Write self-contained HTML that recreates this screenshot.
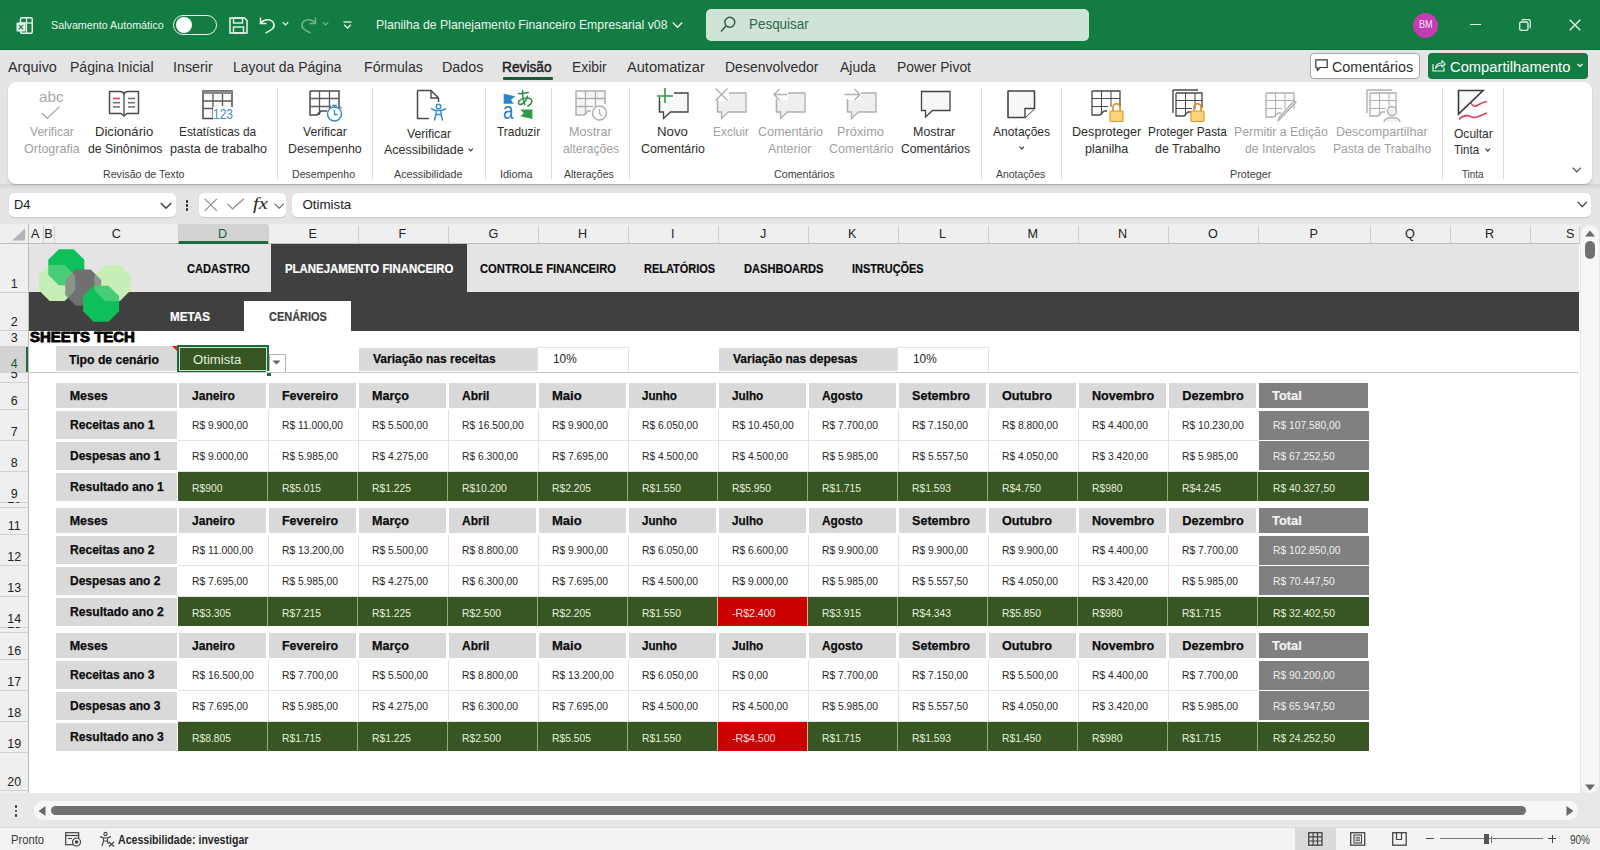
<!DOCTYPE html>
<html><head><meta charset="utf-8"><title>Excel</title>
<style>
html,body{margin:0;padding:0;}
body{width:1600px;height:850px;position:relative;overflow:hidden;background:#fff;font-family:"Liberation Sans", sans-serif;}
.t{position:absolute;line-height:0;white-space:nowrap;transform-origin:0 0;}
svg{position:absolute;overflow:visible;}
</style></head><body>
<div style="position:absolute;left:0px;top:0px;width:1600px;height:50px;background:#137c43;"></div>
<div style="position:absolute;left:0px;top:49.3px;width:1600px;height:0.7000000000000028px;background:#0f6a39;"></div>
<div style="position:absolute;left:0px;top:50px;width:1600px;height:174px;background:#e4e4e5;"></div>
<div style="position:absolute;left:0px;top:184px;width:1600px;height:6px;background:linear-gradient(#d2d2d5,#e4e4e5);"></div>
<div style="position:absolute;left:8px;top:82px;width:1584px;height:102px;background:#fff;border-radius:8px;box-shadow:0 1px 1.5px rgba(0,0,0,0.22);"></div>
<svg style="left:16px;top:17px" width="17" height="17" viewBox="0 0 17 17">
<rect x="4.5" y="0.75" width="11.75" height="15.5" rx="1.5" fill="none" stroke="#eaf5ee" stroke-width="1.5"/>
<line x1="4.5" y1="6" x2="16" y2="6" stroke="#eaf5ee" stroke-width="1.3"/>
<line x1="10.5" y1="1" x2="10.5" y2="16" stroke="#eaf5ee" stroke-width="1.3"/>
<rect x="0.5" y="5.5" width="9" height="9" rx="1.2" fill="#eaf5ee"/>
<path d="M2.8 7.8 L7.2 12.4 M7.2 7.8 L2.8 12.4" stroke="#137c43" stroke-width="1.2"/>
</svg>
<div style="position:absolute;left:172.5px;top:14.5px;width:42px;height:18px;border:1.5px solid #eaf5ee;border-radius:11px;"></div>
<div style="position:absolute;left:175.5px;top:17px;width:16px;height:16px;border-radius:50%;background:#fff;"></div>
<svg style="left:229px;top:17px" width="19" height="17" viewBox="0 0 19 17">
<path d="M1 1 H15.5 L18 3.5 V16 H1 Z" fill="none" stroke="#eaf5ee" stroke-width="1.5"/>
<rect x="4.5" y="1" width="9" height="5" fill="none" stroke="#eaf5ee" stroke-width="1.4"/>
<rect x="4.5" y="10" width="10" height="6" fill="none" stroke="#eaf5ee" stroke-width="1.4"/>
</svg>
<svg style="left:259px;top:16px" width="18" height="18" viewBox="0 0 18 18">
<path d="M1.5 1.5 V7.5 H7.5" fill="none" stroke="#eaf5ee" stroke-width="1.5"/>
<path d="M1.8 7.2 C5 3 12 2.5 14.5 7 C16.5 10.5 14 13.5 6.5 17" fill="none" stroke="#eaf5ee" stroke-width="1.5"/>
</svg>
<svg style="left:282px;top:21px" width="7" height="6" viewBox="0 0 7 6"><path d="M0.7 1.2 L3.5 4 L6.3 1.2" fill="none" stroke="#eaf5ee" stroke-width="1.2"/></svg>
<svg style="left:299px;top:16px" width="18" height="18" viewBox="0 0 18 18">
<path d="M16.5 1.5 V7.5 H10.5" fill="none" stroke="#6fb58c" stroke-width="1.5"/>
<path d="M16.2 7.2 C13 3 6 2.5 3.5 7 C1.5 10.5 4 13.5 11.5 17" fill="none" stroke="#6fb58c" stroke-width="1.5"/>
</svg>
<svg style="left:322px;top:21px" width="7" height="6" viewBox="0 0 7 6"><path d="M0.7 1.2 L3.5 4 L6.3 1.2" fill="none" stroke="#6fb58c" stroke-width="1.2"/></svg>
<svg style="left:343px;top:21px" width="9" height="9" viewBox="0 0 9 9"><line x1="0.5" y1="1" x2="8.5" y2="1" stroke="#eaf5ee" stroke-width="1.3"/><path d="M1.2 3.8 L4.5 7 L7.8 3.8" fill="none" stroke="#eaf5ee" stroke-width="1.3"/></svg>
<svg style="left:672px;top:21px" width="11" height="8" viewBox="0 0 11 8"><path d="M0.8 1.5 L5.5 6.2 L10.2 1.5" fill="none" stroke="#eaf5ee" stroke-width="1.4"/></svg>
<div style="position:absolute;left:706px;top:9px;width:383px;height:32px;background:#cfe3d6;border-radius:5px;"></div>
<svg style="left:720px;top:16px" width="16" height="17" viewBox="0 0 16 17">
<circle cx="9.8" cy="6.2" r="5" fill="none" stroke="#2c5a40" stroke-width="1.4"/>
<line x1="6.2" y1="9.8" x2="1" y2="15.5" stroke="#2c5a40" stroke-width="1.5"/>
</svg>
<div style="position:absolute;left:1412.5px;top:12.5px;width:25px;height:25px;border-radius:50%;background:#c43bb4;"></div>
<div style="position:absolute;left:1469.5px;top:24px;width:11px;height:1.3px;background:#eaf5ee;"></div>
<svg style="left:1519px;top:19px" width="12" height="12" viewBox="0 0 12 12">
<rect x="0.7" y="3" width="8.3" height="8.3" rx="1.5" fill="none" stroke="#eaf5ee" stroke-width="1.3"/>
<path d="M3 1.5 C3 0.8 3.5 0.7 4.5 0.7 H9.5 C10.8 0.7 11.3 1.2 11.3 2.5 V7.5 C11.3 8.5 11.2 9 10.5 9" fill="none" stroke="#eaf5ee" stroke-width="1.2"/>
</svg>
<svg style="left:1569px;top:19px" width="12" height="12" viewBox="0 0 12 12"><path d="M0.7 0.7 L11.3 11.3 M11.3 0.7 L0.7 11.3" stroke="#eaf5ee" stroke-width="1.3"/></svg>
<div style="position:absolute;left:502.5px;top:77px;width:50.5px;height:2.5px;background:#185c37;border-radius:1px;"></div>
<div style="position:absolute;left:1310px;top:53px;width:107.5px;height:23.5px;background:#fff;border:1px solid #a8a8a8;border-radius:4px;"></div>
<svg style="left:1315px;top:59px" width="13" height="13" viewBox="0 0 13 13">
<path d="M0.8 0.8 H12.2 V8.5 H5 L2.3 11.5 V8.5 H0.8 Z" fill="none" stroke="#333" stroke-width="1.2" stroke-linejoin="round"/>
</svg>
<div style="position:absolute;left:1428px;top:53px;width:159.5px;height:25.5px;background:#137c43;border-radius:4px;"></div>
<svg style="left:1432px;top:58px" width="14" height="14" viewBox="0 0 14 14">
<path d="M1 6 V13 H12 V9.5" fill="none" stroke="#eaf5ee" stroke-width="1.2"/>
<path d="M3.5 10.5 C4 6.5 6.5 5 10 5 V2.5 L13.2 6 L10 9.2 V7 C7.5 7 5 8 3.5 10.5 Z" fill="none" stroke="#eaf5ee" stroke-width="1.1" stroke-linejoin="round"/>
</svg>
<svg style="left:1577px;top:63px" width="6" height="5" viewBox="0 0 6 5"><path d="M0.5 1 L3 3.5 L5.5 1" fill="none" stroke="#fff" stroke-width="1.1"/></svg>
<div style="position:absolute;left:276.75px;top:88px;width:1.0px;height:91px;background:#dadada;"></div>
<div style="position:absolute;left:372.0px;top:88px;width:1.0px;height:91px;background:#dadada;"></div>
<div style="position:absolute;left:485.1px;top:88px;width:1.0px;height:91px;background:#dadada;"></div>
<div style="position:absolute;left:551.0px;top:88px;width:1.0px;height:91px;background:#dadada;"></div>
<div style="position:absolute;left:628.7px;top:88px;width:1.0px;height:91px;background:#dadada;"></div>
<div style="position:absolute;left:981.4px;top:88px;width:1.0px;height:91px;background:#dadada;"></div>
<div style="position:absolute;left:1061.0px;top:88px;width:1.0px;height:91px;background:#dadada;"></div>
<div style="position:absolute;left:1441.75px;top:88px;width:1.0px;height:91px;background:#dadada;"></div>
<div style="position:absolute;left:1503.0px;top:88px;width:1.0px;height:91px;background:#dadada;"></div>
<svg style="left:467.5px;top:148px" width="5.5" height="3.5" viewBox="0 0 5.5 3.5"><path d="M0.6 0.6 L2.75 2.9 L4.9 0.6" fill="none" stroke="#333" stroke-width="1.1"/></svg>
<svg style="left:1018.5px;top:146.25px" width="5.5" height="3.75" viewBox="0 0 5.5 3.75"><path d="M0.6 0.6 L2.75 3.15 L4.9 0.6" fill="none" stroke="#333" stroke-width="1.1"/></svg>
<svg style="left:1485.4px;top:147.75px" width="5.599999999999909" height="3.75" viewBox="0 0 5.599999999999909 3.75"><path d="M0.6 0.6 L2.7999999999999545 3.15 L4.999999999999909 0.6" fill="none" stroke="#333" stroke-width="1.1"/></svg>
<svg style="left:1571.9px;top:167.25px" width="9.349999999999909" height="5.550000000000011" viewBox="0 0 9.349999999999909 5.550000000000011"><path d="M0.6 0.6 L4.6749999999999545 4.950000000000012 L8.74999999999991 0.6" fill="none" stroke="#444" stroke-width="1.1"/></svg>
<svg style="left:40px;top:105px" width="22" height="15" viewBox="0 0 22 15"><path d="M1.6 8 L7.3 13.3 L19.5 1.6" fill="none" stroke="#a8a8a8" stroke-width="1.3"/></svg>
<svg style="left:108px;top:90px" width="33" height="28" viewBox="0 0 33 28"><path d="M1.5 1.5 H12 C14 1.5 15.5 2.5 16 4 C16.5 2.5 18 1.5 20 1.5 H30.5 V23.5 H19 L16 26 L13 23.5 H1.5 Z" fill="#fafafa" stroke="#4a4a4a" stroke-width="1.5" stroke-linejoin="round"/>
<line x1="16" y1="4" x2="16" y2="25" stroke="#4a4a4a" stroke-width="1.3"/>
<line x1="5" y1="8.5" x2="12" y2="8.5" stroke="#e0426b" stroke-width="1.6"/>
<line x1="5" y1="12.7" x2="12" y2="12.7" stroke="#707070" stroke-width="1.5"/>
<line x1="5" y1="16.9" x2="12" y2="16.9" stroke="#707070" stroke-width="1.5"/>
<line x1="20" y1="8.5" x2="27" y2="8.5" stroke="#707070" stroke-width="1.5"/>
<line x1="20" y1="12.7" x2="27" y2="12.7" stroke="#707070" stroke-width="1.5"/>
<line x1="20" y1="16.9" x2="27" y2="16.9" stroke="#707070" stroke-width="1.5"/></svg>
<svg style="left:202px;top:90px" width="32" height="31" viewBox="0 0 32 31"><rect x="1" y="1" width="29" height="27.5" fill="#fafafa" stroke="#4a4a4a" stroke-width="1.5"/>
<rect x="1" y="1" width="29" height="3" fill="#888"/>
<path d="M1 11 H30 M1 18.5 H12 M11 4 V28.5 M20.5 4 V16" stroke="#5a5a5a" stroke-width="1.3" fill="none"/>
<rect x="11" y="17" width="21" height="13" fill="#fff"/></svg>
<svg style="left:309px;top:90px" width="36" height="33" viewBox="0 0 36 33"><path d="M1 1 H30 V18 M1 1 V25 H8 L12 21 H18" fill="none" stroke="#4a4a4a" stroke-width="1.5"/>
<path d="M1 8.5 H30 M1 16.5 H22 M10.5 1 V25 M20.5 1 V18" stroke="#5a5a5a" stroke-width="1.3" fill="none"/>
<path d="M8 25 L12 21" stroke="#4a4a4a" stroke-width="1.2"/>
<circle cx="25.5" cy="24" r="7" fill="#fff" stroke="#3a8cc9" stroke-width="1.5"/>
<path d="M23 15.5 H28 M25.5 15.5 V17 M25.5 20 V24.5 H28.5 M31 17 L32.5 18.5" fill="none" stroke="#3a8cc9" stroke-width="1.4"/></svg>
<svg style="left:416px;top:89px" width="32" height="33" viewBox="0 0 32 33"><path d="M1.5 1.5 H15 L22.5 9 V13 M1.5 1.5 V29.5 H13" fill="none" stroke="#4a4a4a" stroke-width="1.5"/>
<path d="M15 1.5 V9 H22.5" fill="none" stroke="#4a4a4a" stroke-width="1.4"/>
<circle cx="22.5" cy="17.5" r="2.3" fill="none" stroke="#3a8cc9" stroke-width="1.4"/>
<path d="M15.5 19.5 C17.5 22 19.5 21.5 22.5 21.5 C25.5 21.5 27.5 22 29.5 19.5 M20 21.8 V25.5 L18.5 31 M25 21.8 V25.5 L26.5 31 M20 25.5 H25" fill="none" stroke="#3a8cc9" stroke-width="1.5" stroke-linecap="round"/></svg>
<svg style="left:0px;top:0px" width="1600" height="850" viewBox="0 0 1600 850"><path d="M503.7 93.7 L515.2 96.3 L511 100 L513.8 103.8 L503.7 103.8 Z" fill="#2b86cf"/><path d="M532.4 119 L520.4 116.3 L523.8 113.2 L520.4 109.5 L532.4 109.5 Z" fill="#2e9a48"/></svg>
<svg style="left:516px;top:89px" width="18" height="19" viewBox="0 0 18 19"><path d="M2.5 4.6 C5.5 4.8 9 4.3 12.2 3.6" fill="none" stroke="#2e8b4a" stroke-width="1.5" stroke-linecap="round"/><path d="M6.6 1.6 C6.4 5.5 6.8 10.5 8.8 15.8" fill="none" stroke="#2e8b4a" stroke-width="1.5" stroke-linecap="round"/><path d="M11.5 7.2 C10.5 11 7.5 15.5 4.2 15.5 C2.2 15.5 1.8 13.2 3.5 11.5 C6 9 11.5 8.3 14.2 9.6 C16.8 10.9 16.5 15 11.8 17" fill="none" stroke="#2e8b4a" stroke-width="1.5" stroke-linecap="round"/></svg>
<svg style="left:575px;top:90px" width="34" height="31" viewBox="0 0 34 31"><path d="M1 1 H30 V14 M1 1 V25 H9 L13 21 H16" fill="#f4f4f4" stroke="#b0b0b0" stroke-width="1.5"/>
<path d="M1 8.5 H30 M1 16.5 H18 M10.5 1 V25 M20.5 1 V17" stroke="#b0b0b0" stroke-width="1.3" fill="none"/>
<circle cx="24.5" cy="23" r="7" fill="#fff" stroke="#b0b0b0" stroke-width="1.5"/>
<path d="M24.5 19 V23.5 L27 26" fill="none" stroke="#b0b0b0" stroke-width="1.3"/></svg>
<svg style="left:657px;top:87px" width="33" height="33" viewBox="0 0 33 33"><g transform="translate(1.5,5)"><path d="M1 1 H29.5 V20 H12 L5 26.5 V20 H1 Z" fill="#f7f7f7" stroke="#444" stroke-width="1.3" stroke-linejoin="miter"/></g>
<rect x="0" y="3.5" width="17" height="10" fill="#fff"/>
<path d="M0 9 H16 M8 1 V16" stroke="#2e9a48" stroke-width="1.6"/>
<path d="M2.5 10 V25" stroke="#444" stroke-width="1.3"/></svg>
<svg style="left:714px;top:87px" width="34" height="33" viewBox="0 0 34 33"><g transform="translate(2.5,5)"><path d="M1 1 H29.5 V20 H12 L5 26.5 V20 H1 Z" fill="#efefef" stroke="#b0b0b0" stroke-width="1.3" stroke-linejoin="miter"/></g>
<rect x="0" y="1" width="15" height="13" fill="#fff"/>
<path d="M1.5 1.5 L13.5 13.5 M13.5 1.5 L1.5 13.5" stroke="#b0b0b0" stroke-width="1.4"/>
<path d="M3.5 12 V25" stroke="#b0b0b0" stroke-width="1.3"/></svg>
<svg style="left:773px;top:87px" width="34" height="33" viewBox="0 0 34 33"><g transform="translate(2.5,5)"><path d="M1 1 H29.5 V20 H12 L5 26.5 V20 H1 Z" fill="#efefef" stroke="#b0b0b0" stroke-width="1.3" stroke-linejoin="miter"/></g>
<rect x="0" y="2" width="15" height="11" fill="#fff"/>
<path d="M1 7.5 H14 M6.5 2 L1 7.5 L6.5 13" fill="none" stroke="#b0b0b0" stroke-width="1.4"/>
<path d="M3.5 12 V25" stroke="#b0b0b0" stroke-width="1.3"/></svg>
<svg style="left:844px;top:87px" width="34" height="33" viewBox="0 0 34 33"><g transform="translate(2.5,5)"><path d="M1 1 H29.5 V20 H12 L5 26.5 V20 H1 Z" fill="#efefef" stroke="#b0b0b0" stroke-width="1.3" stroke-linejoin="miter"/></g>
<rect x="0" y="2" width="17" height="11" fill="#fff"/>
<path d="M0.5 7.5 H16 M10.5 2 L16 7.5 L10.5 13" fill="none" stroke="#b0b0b0" stroke-width="1.4"/>
<path d="M3.5 12 V25" stroke="#b0b0b0" stroke-width="1.3"/></svg>
<svg style="left:920px;top:90px" width="33" height="30" viewBox="0 0 33 30"><g transform="translate(0.5,0.5)"><path d="M1 1 H29.5 V20 H12 L5 26.5 V20 H1 Z" fill="#f7f7f7" stroke="#444" stroke-width="1.3" stroke-linejoin="miter"/></g></svg>
<svg style="left:1007px;top:90px" width="30" height="30" viewBox="0 0 30 30"><path d="M1 1 H27.5 V18.5 L18 27.5 H1 Z" fill="#f7f7f7" stroke="#444" stroke-width="1.6" stroke-linejoin="round"/><path d="M27.5 18.5 H18 V27.5" fill="#fff" stroke="#444" stroke-width="1.4"/></svg>
<svg style="left:1091px;top:90px" width="34" height="33" viewBox="0 0 34 33"><path d="M1 1 H29 V17 M1 1 V25 H9 L13 21 H16" fill="#fbfbfb" stroke="#4a4a4a" stroke-width="1.3"/>
<path d="M1 8.5 H29 M1 16.5 H17 M10.5 1 V25 M20 1 V17" stroke="#4a4a4a" stroke-width="1" fill="none"/><path d="M22 12 V8.5 C22 3.5 29 3.5 29 8.5 V12" transform="translate(0,9)" fill="none" stroke="#d98c1f" stroke-width="1.6"/><rect x="19" y="21" width="13" height="10.5" rx="1" fill="#f9d27a" stroke="#dc9a2e" stroke-width="1.2"/></svg>
<svg style="left:1172px;top:89px" width="34" height="34" viewBox="0 0 34 34"><path d="M1 1 H26 M1 1 V24" stroke="#4a4a4a" stroke-width="1.4" fill="none"/><g transform="translate(3,3)"><path d="M1 1 H27 V16 M1 1 V24 H9 L13 20 H16" fill="#fbfbfb" stroke="#4a4a4a" stroke-width="1.3"/>
<path d="M1 8.5 H27 M1 16.5 H17 M10.5 1 V24 M20 1 V17" stroke="#4a4a4a" stroke-width="1" fill="none"/></g><path d="M22 12 V8.5 C22 3.5 29 3.5 29 8.5 V12" transform="translate(0,10)" fill="none" stroke="#d98c1f" stroke-width="1.6"/><rect x="19" y="22" width="13" height="10.5" rx="1" fill="#f9d27a" stroke="#dc9a2e" stroke-width="1.2"/></svg>
<svg style="left:1265px;top:92px" width="34" height="31" viewBox="0 0 34 31"><path d="M1 1 H29 V17 M1 1 V25 H9 L13 21 H16" fill="#fbfbfb" stroke="#b0b0b0" stroke-width="1.3"/>
<path d="M1 8.5 H29 M1 16.5 H17 M10.5 1 V25 M20 1 V17" stroke="#b0b0b0" stroke-width="1" fill="none"/><path d="M31 10 L16 26 L13 29 L14.5 25 L29 9 Z" fill="#fff" stroke="#b0b0b0" stroke-width="1.4" stroke-linejoin="round"/></svg>
<svg style="left:1366px;top:89px" width="34" height="34" viewBox="0 0 34 34"><path d="M1 1 H26 M1 1 V24" stroke="#b0b0b0" stroke-width="1.4" fill="none"/><g transform="translate(3,3)"><path d="M1 1 H27 V16 M1 1 V24 H9 L13 20 H16" fill="#fbfbfb" stroke="#b0b0b0" stroke-width="1.3"/>
<path d="M1 8.5 H27 M1 16.5 H17 M10.5 1 V24 M20 1 V17" stroke="#b0b0b0" stroke-width="1" fill="none"/></g><circle cx="26" cy="22" r="4.5" fill="#f0f0f0" stroke="#b0b0b0" stroke-width="1.4"/><path d="M18 33 C18 27 34 27 34 33" fill="#f0f0f0" stroke="#b0b0b0" stroke-width="1.4"/></svg>
<svg style="left:1457px;top:89px" width="33" height="32" viewBox="0 0 33 32"><path d="M1.5 1.5 H26 L1.5 25 Z" fill="#f7f7f7" stroke="#3a3a3a" stroke-width="1.6" stroke-linejoin="miter"/><path d="M14 14 C16 18 18 18 22 15.5 C25 13.5 27 13 30 12.5" fill="none" stroke="#d6405a" stroke-width="1.6"/><path d="M2 30.5 C6 26 11 26 15 28 C19 30 22 27 30 24" fill="none" stroke="#d6405a" stroke-width="1.6"/></svg>
<div style="position:absolute;left:9px;top:193px;width:167px;height:24px;background:#fff;border-radius:5px;box-shadow:0 0.5px 1px rgba(0,0,0,0.12);"></div>
<svg style="left:160px;top:202px" width="12" height="8" viewBox="0 0 12 8"><path d="M0.8 1 L6 6.3 L11.2 1" fill="none" stroke="#333" stroke-width="1.3"/></svg>
<div style="position:absolute;left:185.8px;top:200.10000000000002px;width:2.5px;height:2.5px;border-radius:50%;background:#222;"></div>
<div style="position:absolute;left:185.8px;top:204.20000000000002px;width:2.5px;height:2.5px;border-radius:50%;background:#222;"></div>
<div style="position:absolute;left:185.8px;top:208.20000000000002px;width:2.5px;height:2.5px;border-radius:50%;background:#222;"></div>
<div style="position:absolute;left:198.6px;top:193px;width:87px;height:23.5px;background:#fff;border-radius:5px;box-shadow:0 0.5px 1px rgba(0,0,0,0.12);"></div>
<svg style="left:204px;top:198px" width="14" height="14" viewBox="0 0 14 14"><path d="M0.8 0.8 L12.8 12.8 M12.8 0.8 L0.8 12.8" stroke="#8e8e8e" stroke-width="1.2"/></svg>
<svg style="left:227px;top:198px" width="18" height="12" viewBox="0 0 18 12"><path d="M0.6 5.8 L5.5 10.8 L16.8 0.8" fill="none" stroke="#8e8e8e" stroke-width="1.2"/></svg>
<svg style="left:274px;top:203px" width="11" height="6" viewBox="0 0 11 6"><path d="M0.6 0.6 L5.2 5.2 L9.8 0.6" fill="none" stroke="#666" stroke-width="1.1"/></svg>
<div style="position:absolute;left:292px;top:193px;width:1298.5px;height:24px;background:#fff;border-radius:5px;box-shadow:0 0.5px 1px rgba(0,0,0,0.12);"></div>
<svg style="left:1577px;top:201px" width="11" height="7" viewBox="0 0 11 7"><path d="M0.7 0.8 L5.3 5.6 L9.9 0.8" fill="none" stroke="#333" stroke-width="1.2"/></svg>
<div style="position:absolute;left:0px;top:224px;width:1580px;height:19.5px;background:#efefef;"></div>
<div style="position:absolute;left:0px;top:243px;width:1580px;height:1px;background:#bdbdbd;"></div>
<div style="position:absolute;left:178px;top:224px;width:90px;height:19.5px;background:#d3d3d3;"></div>
<div style="position:absolute;left:178px;top:241.3px;width:90px;height:2.299999999999983px;background:#1f6b41;"></div>
<svg style="left:11px;top:228px" width="15" height="13" viewBox="0 0 15 13"><path d="M14 0.5 V12.5 H1 Z" fill="#b4b4b4"/></svg>
<div style="position:absolute;left:27.5px;top:224px;width:1.0px;height:20px;background:#c4c4c4;"></div>
<div style="position:absolute;left:42.5px;top:225.5px;width:1.0px;height:17.5px;background:#cfcfcf;"></div>
<div style="position:absolute;left:54.0px;top:225.5px;width:1.0px;height:17.5px;background:#cfcfcf;"></div>
<div style="position:absolute;left:177.5px;top:225.5px;width:1.0px;height:17.5px;background:#cfcfcf;"></div>
<div style="position:absolute;left:267.5px;top:225.5px;width:1.0px;height:17.5px;background:#cfcfcf;"></div>
<div style="position:absolute;left:357.5px;top:225.5px;width:1.0px;height:17.5px;background:#cfcfcf;"></div>
<div style="position:absolute;left:447.5px;top:225.5px;width:1.0px;height:17.5px;background:#cfcfcf;"></div>
<div style="position:absolute;left:537.5px;top:225.5px;width:1.0px;height:17.5px;background:#cfcfcf;"></div>
<div style="position:absolute;left:627.5px;top:225.5px;width:1.0px;height:17.5px;background:#cfcfcf;"></div>
<div style="position:absolute;left:717.5px;top:225.5px;width:1.0px;height:17.5px;background:#cfcfcf;"></div>
<div style="position:absolute;left:807.5px;top:225.5px;width:1.0px;height:17.5px;background:#cfcfcf;"></div>
<div style="position:absolute;left:897.5px;top:225.5px;width:1.0px;height:17.5px;background:#cfcfcf;"></div>
<div style="position:absolute;left:987.5px;top:225.5px;width:1.0px;height:17.5px;background:#cfcfcf;"></div>
<div style="position:absolute;left:1077.5px;top:225.5px;width:1.0px;height:17.5px;background:#cfcfcf;"></div>
<div style="position:absolute;left:1167.5px;top:225.5px;width:1.0px;height:17.5px;background:#cfcfcf;"></div>
<div style="position:absolute;left:1257.5px;top:225.5px;width:1.0px;height:17.5px;background:#cfcfcf;"></div>
<div style="position:absolute;left:1369.5px;top:225.5px;width:1.0px;height:17.5px;background:#cfcfcf;"></div>
<div style="position:absolute;left:1449.5px;top:225.5px;width:1.0px;height:17.5px;background:#cfcfcf;"></div>
<div style="position:absolute;left:1529.5px;top:225.5px;width:1.0px;height:17.5px;background:#cfcfcf;"></div>
<div style="position:absolute;left:1578.5px;top:225.5px;width:1.0px;height:17.5px;background:#cfcfcf;"></div>
<div style="position:absolute;left:0px;top:244px;width:28px;height:549px;background:#efefef;"></div>
<div style="position:absolute;left:0px;top:346px;width:28px;height:26px;background:#d3d3d3;"></div>
<div style="position:absolute;left:26px;top:346px;width:2.1999999999999993px;height:26px;background:#1f6b41;"></div>
<div style="position:absolute;left:28px;top:244px;width:1px;height:549px;background:#bdbdbd;"></div>
<div style="position:absolute;left:0px;top:291.5px;width:28px;height:1.0px;background:#d2d2d2;"></div>
<div style="position:absolute;left:0px;top:329.5px;width:28px;height:1.0px;background:#d2d2d2;"></div>
<div style="position:absolute;left:0px;top:345.5px;width:28px;height:1.0px;background:#d2d2d2;"></div>
<div style="position:absolute;left:0px;top:371.5px;width:28px;height:1.0px;background:#d2d2d2;"></div>
<div style="position:absolute;left:0px;top:381.5px;width:28px;height:1.0px;background:#d2d2d2;"></div>
<div style="position:absolute;left:0px;top:408.5px;width:28px;height:1.0px;background:#d2d2d2;"></div>
<div style="position:absolute;left:0px;top:439.5px;width:28px;height:1.0px;background:#d2d2d2;"></div>
<div style="position:absolute;left:0px;top:470.5px;width:28px;height:1.0px;background:#d2d2d2;"></div>
<div style="position:absolute;left:0px;top:501.5px;width:28px;height:1.0px;background:#d2d2d2;"></div>
<div style="position:absolute;left:0px;top:506.5px;width:28px;height:1.0px;background:#d2d2d2;"></div>
<div style="position:absolute;left:0px;top:533.5px;width:28px;height:1.0px;background:#d2d2d2;"></div>
<div style="position:absolute;left:0px;top:564.5px;width:28px;height:1.0px;background:#d2d2d2;"></div>
<div style="position:absolute;left:0px;top:595.5px;width:28px;height:1.0px;background:#d2d2d2;"></div>
<div style="position:absolute;left:0px;top:626.5px;width:28px;height:1.0px;background:#d2d2d2;"></div>
<div style="position:absolute;left:0px;top:631.5px;width:28px;height:1.0px;background:#d2d2d2;"></div>
<div style="position:absolute;left:0px;top:658.5px;width:28px;height:1.0px;background:#d2d2d2;"></div>
<div style="position:absolute;left:0px;top:689.5px;width:28px;height:1.0px;background:#d2d2d2;"></div>
<div style="position:absolute;left:0px;top:720.5px;width:28px;height:1.0px;background:#d2d2d2;"></div>
<div style="position:absolute;left:0px;top:751.5px;width:28px;height:1.0px;background:#d2d2d2;"></div>
<div style="position:absolute;left:0px;top:789.5px;width:28px;height:1.0px;background:#d2d2d2;"></div>
<div style="position:absolute;left:29px;top:244px;width:1551px;height:549px;background:#ffffff;"></div>
<div style="position:absolute;left:29px;top:244px;width:1550px;height:48px;background:#e4e4e4;"></div>
<div style="position:absolute;left:29px;top:292px;width:1550px;height:38.5px;background:#404040;"></div>
<div style="position:absolute;left:271px;top:244px;width:195.5px;height:48px;background:#404040;"></div>
<div style="position:absolute;left:244px;top:301px;width:107px;height:29.5px;background:#ffffff;"></div>
<svg style="left:0px;top:0px" width="1600" height="850" viewBox="0 0 1600 850">
<polygon points="75.22,290.46 64.66,301.02 49.74,301.02 39.18,290.46 39.18,275.54 49.74,264.98 64.66,264.98 75.22,275.54" fill="#c7eeb6"/>
<polygon points="130.42,290.46 119.86,301.02 104.94,301.02 94.38,290.46 94.38,275.54 104.94,264.98 119.86,264.98 130.42,275.54" fill="#c7eeb6"/>
<polygon points="84.32,274.76 73.76,285.32 58.84,285.32 48.28,274.76 48.28,259.84 58.84,249.28 73.76,249.28 84.32,259.84" fill="#0fbf59"/>
<polygon points="101.22,294.96 90.66,305.52 75.74,305.52 65.18,294.96 65.18,280.04 75.74,269.48 90.66,269.48 101.22,280.04" fill="#707070"/>
<polygon points="119.12,311.26 108.56,321.82 93.64,321.82 83.08,311.26 83.08,296.34 93.64,285.78 108.56,285.78 119.12,296.34" fill="#0fbf59"/>
<polygon points="75.22,290.46 64.66,301.02 49.74,301.02 39.18,290.46 39.18,275.54 49.74,264.98 64.66,264.98 75.22,275.54" fill="#c7eeb6" opacity="0.3"/>
<polygon points="130.42,290.46 119.86,301.02 104.94,301.02 94.38,290.46 94.38,275.54 104.94,264.98 119.86,264.98 130.42,275.54" fill="#c7eeb6" opacity="0.3"/>
</svg>
<div style="position:absolute;left:56px;top:346.3px;width:120.9px;height:24.5px;background:#d9d9d9;"></div>
<svg style="left:172px;top:346px" width="5" height="5" viewBox="0 0 5 5"><path d="M0 0 H5 V5 Z" fill="#e02020"/></svg>
<div style="position:absolute;left:177.3px;top:345.3px;width:91.5px;height:28.099999999999966px;background:#1f6b41;"></div>
<div style="position:absolute;left:179.3px;top:347.3px;width:87.5px;height:24.099999999999966px;background:#c9e3c9;"></div>
<div style="position:absolute;left:180.3px;top:348.3px;width:85.5px;height:22.099999999999966px;background:#375623;"></div>
<div style="position:absolute;left:268.5px;top:353.5px;width:15.5px;height:17.5px;background:#fff;border:1px solid #b5b5b5;"></div>
<svg style="left:272px;top:360px" width="9" height="5" viewBox="0 0 9 5"><path d="M0.5 0.5 H8.5 L4.5 4.5 Z" fill="#606060"/></svg>
<div style="position:absolute;left:265.5px;top:370.5px;width:6.0px;height:6.0px;background:#ffffff;"></div>
<div style="position:absolute;left:266.5px;top:371.5px;width:4.0px;height:4.0px;background:#1f6b41;"></div>
<div style="position:absolute;left:359px;top:347.5px;width:177.60000000000002px;height:23.5px;background:#d9d9d9;"></div>
<div style="position:absolute;left:537px;top:346.5px;width:90px;height:24px;border:1px solid #e4e4e4;border-bottom:none;"></div>
<div style="position:absolute;left:719px;top:347.5px;width:177.5px;height:23.5px;background:#d9d9d9;"></div>
<div style="position:absolute;left:897px;top:346.5px;width:90px;height:24px;border:1px solid #e4e4e4;border-bottom:none;"></div>
<div style="position:absolute;left:29px;top:372px;width:1550px;height:1.3000000000000114px;background:#c6c6c6;"></div>
<div style="position:absolute;left:56.2px;top:383.2px;width:120.60000000000001px;height:24.600000000000023px;background:#d9d9d9;"></div>
<div style="position:absolute;left:56.2px;top:410.9px;width:120.60000000000001px;height:27.900000000000034px;background:#d9d9d9;"></div>
<div style="position:absolute;left:56.2px;top:442px;width:120.60000000000001px;height:27.80000000000001px;background:#d9d9d9;"></div>
<div style="position:absolute;left:56.2px;top:472.6px;width:120.60000000000001px;height:28.099999999999966px;background:#d9d9d9;"></div>
<div style="position:absolute;left:178px;top:440px;width:1080px;height:1px;background:#e2e2e2;"></div>
<div style="position:absolute;left:178px;top:470.5px;width:1080px;height:1.0px;background:#e2e2e2;"></div>
<div style="position:absolute;left:179.2px;top:383.2px;width:87.10000000000002px;height:24.600000000000023px;background:#d9d9d9;"></div>
<div style="position:absolute;left:177.7px;top:472.3px;width:90.0px;height:29.099999999999966px;background:#375623;"></div>
<div style="position:absolute;left:269.2px;top:383.2px;width:87.10000000000002px;height:24.600000000000023px;background:#d9d9d9;"></div>
<div style="position:absolute;left:267.5px;top:410px;width:1.0px;height:61px;background:#e2e2e2;"></div>
<div style="position:absolute;left:267.7px;top:472.3px;width:90.0px;height:29.099999999999966px;background:#375623;"></div>
<div style="position:absolute;left:267.2px;top:472.3px;width:1.0px;height:29.099999999999966px;background:#8fae7a;"></div>
<div style="position:absolute;left:359.2px;top:383.2px;width:87.10000000000002px;height:24.600000000000023px;background:#d9d9d9;"></div>
<div style="position:absolute;left:357.5px;top:410px;width:1.0px;height:61px;background:#e2e2e2;"></div>
<div style="position:absolute;left:357.7px;top:472.3px;width:90.0px;height:29.099999999999966px;background:#375623;"></div>
<div style="position:absolute;left:357.2px;top:472.3px;width:1.0px;height:29.099999999999966px;background:#8fae7a;"></div>
<div style="position:absolute;left:449.2px;top:383.2px;width:87.09999999999997px;height:24.600000000000023px;background:#d9d9d9;"></div>
<div style="position:absolute;left:447.5px;top:410px;width:1.0px;height:61px;background:#e2e2e2;"></div>
<div style="position:absolute;left:447.7px;top:472.3px;width:90.00000000000006px;height:29.099999999999966px;background:#375623;"></div>
<div style="position:absolute;left:447.2px;top:472.3px;width:1.0px;height:29.099999999999966px;background:#8fae7a;"></div>
<div style="position:absolute;left:539.2px;top:383.2px;width:87.09999999999991px;height:24.600000000000023px;background:#d9d9d9;"></div>
<div style="position:absolute;left:537.5px;top:410px;width:1.0px;height:61px;background:#e2e2e2;"></div>
<div style="position:absolute;left:537.7px;top:472.3px;width:90.0px;height:29.099999999999966px;background:#375623;"></div>
<div style="position:absolute;left:537.2px;top:472.3px;width:1.0px;height:29.099999999999966px;background:#8fae7a;"></div>
<div style="position:absolute;left:629.2px;top:383.2px;width:87.09999999999991px;height:24.600000000000023px;background:#d9d9d9;"></div>
<div style="position:absolute;left:627.5px;top:410px;width:1.0px;height:61px;background:#e2e2e2;"></div>
<div style="position:absolute;left:627.7px;top:472.3px;width:90.0px;height:29.099999999999966px;background:#375623;"></div>
<div style="position:absolute;left:627.2px;top:472.3px;width:1.0px;height:29.099999999999966px;background:#8fae7a;"></div>
<div style="position:absolute;left:719.2px;top:383.2px;width:87.09999999999991px;height:24.600000000000023px;background:#d9d9d9;"></div>
<div style="position:absolute;left:717.5px;top:410px;width:1.0px;height:61px;background:#e2e2e2;"></div>
<div style="position:absolute;left:717.7px;top:472.3px;width:90.0px;height:29.099999999999966px;background:#375623;"></div>
<div style="position:absolute;left:717.2px;top:472.3px;width:1.0px;height:29.099999999999966px;background:#8fae7a;"></div>
<div style="position:absolute;left:809.2px;top:383.2px;width:87.09999999999991px;height:24.600000000000023px;background:#d9d9d9;"></div>
<div style="position:absolute;left:807.5px;top:410px;width:1.0px;height:61px;background:#e2e2e2;"></div>
<div style="position:absolute;left:807.7px;top:472.3px;width:90.0px;height:29.099999999999966px;background:#375623;"></div>
<div style="position:absolute;left:807.2px;top:472.3px;width:1.0px;height:29.099999999999966px;background:#8fae7a;"></div>
<div style="position:absolute;left:899.2px;top:383.2px;width:87.09999999999991px;height:24.600000000000023px;background:#d9d9d9;"></div>
<div style="position:absolute;left:897.5px;top:410px;width:1.0px;height:61px;background:#e2e2e2;"></div>
<div style="position:absolute;left:897.7px;top:472.3px;width:90.0px;height:29.099999999999966px;background:#375623;"></div>
<div style="position:absolute;left:897.2px;top:472.3px;width:1.0px;height:29.099999999999966px;background:#8fae7a;"></div>
<div style="position:absolute;left:989.2px;top:383.2px;width:87.09999999999991px;height:24.600000000000023px;background:#d9d9d9;"></div>
<div style="position:absolute;left:987.5px;top:410px;width:1.0px;height:61px;background:#e2e2e2;"></div>
<div style="position:absolute;left:987.7px;top:472.3px;width:90.0px;height:29.099999999999966px;background:#375623;"></div>
<div style="position:absolute;left:987.2px;top:472.3px;width:1.0px;height:29.099999999999966px;background:#8fae7a;"></div>
<div style="position:absolute;left:1079.2px;top:383.2px;width:87.09999999999991px;height:24.600000000000023px;background:#d9d9d9;"></div>
<div style="position:absolute;left:1077.5px;top:410px;width:1.0px;height:61px;background:#e2e2e2;"></div>
<div style="position:absolute;left:1077.7px;top:472.3px;width:90.0px;height:29.099999999999966px;background:#375623;"></div>
<div style="position:absolute;left:1077.2px;top:472.3px;width:1.0px;height:29.099999999999966px;background:#8fae7a;"></div>
<div style="position:absolute;left:1169.2px;top:383.2px;width:87.09999999999991px;height:24.600000000000023px;background:#d9d9d9;"></div>
<div style="position:absolute;left:1167.5px;top:410px;width:1.0px;height:61px;background:#e2e2e2;"></div>
<div style="position:absolute;left:1167.7px;top:472.3px;width:90.0px;height:29.099999999999966px;background:#375623;"></div>
<div style="position:absolute;left:1167.2px;top:472.3px;width:1.0px;height:29.099999999999966px;background:#8fae7a;"></div>
<div style="position:absolute;left:1259.4px;top:383.2px;width:108.89999999999986px;height:24.600000000000023px;background:#808080;"></div>
<div style="position:absolute;left:1258.7px;top:410.6px;width:110.0px;height:29.0px;background:#808080;"></div>
<div style="position:absolute;left:1258.7px;top:441.2px;width:110.0px;height:29.0px;background:#808080;"></div>
<div style="position:absolute;left:1257.7px;top:472.3px;width:111.0px;height:28.69999999999999px;background:#375623;"></div>
<div style="position:absolute;left:1257.2px;top:472.3px;width:1.0px;height:28.69999999999999px;background:#8fae7a;"></div>
<div style="position:absolute;left:56.2px;top:508.2px;width:120.60000000000001px;height:24.599999999999966px;background:#d9d9d9;"></div>
<div style="position:absolute;left:56.2px;top:535.9px;width:120.60000000000001px;height:27.899999999999977px;background:#d9d9d9;"></div>
<div style="position:absolute;left:56.2px;top:567px;width:120.60000000000001px;height:27.799999999999955px;background:#d9d9d9;"></div>
<div style="position:absolute;left:56.2px;top:597.6px;width:120.60000000000001px;height:28.100000000000023px;background:#d9d9d9;"></div>
<div style="position:absolute;left:178px;top:565px;width:1080px;height:1px;background:#e2e2e2;"></div>
<div style="position:absolute;left:178px;top:595.5px;width:1080px;height:1.0px;background:#e2e2e2;"></div>
<div style="position:absolute;left:179.2px;top:508.2px;width:87.10000000000002px;height:24.599999999999966px;background:#d9d9d9;"></div>
<div style="position:absolute;left:177.7px;top:597.3px;width:90.0px;height:29.100000000000023px;background:#375623;"></div>
<div style="position:absolute;left:269.2px;top:508.2px;width:87.10000000000002px;height:24.599999999999966px;background:#d9d9d9;"></div>
<div style="position:absolute;left:267.5px;top:535px;width:1.0px;height:61px;background:#e2e2e2;"></div>
<div style="position:absolute;left:267.7px;top:597.3px;width:90.0px;height:29.100000000000023px;background:#375623;"></div>
<div style="position:absolute;left:267.2px;top:597.3px;width:1.0px;height:29.100000000000023px;background:#8fae7a;"></div>
<div style="position:absolute;left:359.2px;top:508.2px;width:87.10000000000002px;height:24.599999999999966px;background:#d9d9d9;"></div>
<div style="position:absolute;left:357.5px;top:535px;width:1.0px;height:61px;background:#e2e2e2;"></div>
<div style="position:absolute;left:357.7px;top:597.3px;width:90.0px;height:29.100000000000023px;background:#375623;"></div>
<div style="position:absolute;left:357.2px;top:597.3px;width:1.0px;height:29.100000000000023px;background:#8fae7a;"></div>
<div style="position:absolute;left:449.2px;top:508.2px;width:87.09999999999997px;height:24.599999999999966px;background:#d9d9d9;"></div>
<div style="position:absolute;left:447.5px;top:535px;width:1.0px;height:61px;background:#e2e2e2;"></div>
<div style="position:absolute;left:447.7px;top:597.3px;width:90.00000000000006px;height:29.100000000000023px;background:#375623;"></div>
<div style="position:absolute;left:447.2px;top:597.3px;width:1.0px;height:29.100000000000023px;background:#8fae7a;"></div>
<div style="position:absolute;left:539.2px;top:508.2px;width:87.09999999999991px;height:24.599999999999966px;background:#d9d9d9;"></div>
<div style="position:absolute;left:537.5px;top:535px;width:1.0px;height:61px;background:#e2e2e2;"></div>
<div style="position:absolute;left:537.7px;top:597.3px;width:90.0px;height:29.100000000000023px;background:#375623;"></div>
<div style="position:absolute;left:537.2px;top:597.3px;width:1.0px;height:29.100000000000023px;background:#8fae7a;"></div>
<div style="position:absolute;left:629.2px;top:508.2px;width:87.09999999999991px;height:24.599999999999966px;background:#d9d9d9;"></div>
<div style="position:absolute;left:627.5px;top:535px;width:1.0px;height:61px;background:#e2e2e2;"></div>
<div style="position:absolute;left:627.7px;top:597.3px;width:90.0px;height:29.100000000000023px;background:#375623;"></div>
<div style="position:absolute;left:627.2px;top:597.3px;width:1.0px;height:29.100000000000023px;background:#8fae7a;"></div>
<div style="position:absolute;left:719.2px;top:508.2px;width:87.09999999999991px;height:24.599999999999966px;background:#d9d9d9;"></div>
<div style="position:absolute;left:717.5px;top:535px;width:1.0px;height:61px;background:#e2e2e2;"></div>
<div style="position:absolute;left:717.7px;top:597.3px;width:90.0px;height:29.100000000000023px;background:#cc0000;"></div>
<div style="position:absolute;left:717.2px;top:597.3px;width:1.0px;height:29.100000000000023px;background:#f2a9a0;"></div>
<div style="position:absolute;left:809.2px;top:508.2px;width:87.09999999999991px;height:24.599999999999966px;background:#d9d9d9;"></div>
<div style="position:absolute;left:807.5px;top:535px;width:1.0px;height:61px;background:#e2e2e2;"></div>
<div style="position:absolute;left:807.7px;top:597.3px;width:90.0px;height:29.100000000000023px;background:#375623;"></div>
<div style="position:absolute;left:807.2px;top:597.3px;width:1.0px;height:29.100000000000023px;background:#f2a9a0;"></div>
<div style="position:absolute;left:899.2px;top:508.2px;width:87.09999999999991px;height:24.599999999999966px;background:#d9d9d9;"></div>
<div style="position:absolute;left:897.5px;top:535px;width:1.0px;height:61px;background:#e2e2e2;"></div>
<div style="position:absolute;left:897.7px;top:597.3px;width:90.0px;height:29.100000000000023px;background:#375623;"></div>
<div style="position:absolute;left:897.2px;top:597.3px;width:1.0px;height:29.100000000000023px;background:#8fae7a;"></div>
<div style="position:absolute;left:989.2px;top:508.2px;width:87.09999999999991px;height:24.599999999999966px;background:#d9d9d9;"></div>
<div style="position:absolute;left:987.5px;top:535px;width:1.0px;height:61px;background:#e2e2e2;"></div>
<div style="position:absolute;left:987.7px;top:597.3px;width:90.0px;height:29.100000000000023px;background:#375623;"></div>
<div style="position:absolute;left:987.2px;top:597.3px;width:1.0px;height:29.100000000000023px;background:#8fae7a;"></div>
<div style="position:absolute;left:1079.2px;top:508.2px;width:87.09999999999991px;height:24.599999999999966px;background:#d9d9d9;"></div>
<div style="position:absolute;left:1077.5px;top:535px;width:1.0px;height:61px;background:#e2e2e2;"></div>
<div style="position:absolute;left:1077.7px;top:597.3px;width:90.0px;height:29.100000000000023px;background:#375623;"></div>
<div style="position:absolute;left:1077.2px;top:597.3px;width:1.0px;height:29.100000000000023px;background:#8fae7a;"></div>
<div style="position:absolute;left:1169.2px;top:508.2px;width:87.09999999999991px;height:24.599999999999966px;background:#d9d9d9;"></div>
<div style="position:absolute;left:1167.5px;top:535px;width:1.0px;height:61px;background:#e2e2e2;"></div>
<div style="position:absolute;left:1167.7px;top:597.3px;width:90.0px;height:29.100000000000023px;background:#375623;"></div>
<div style="position:absolute;left:1167.2px;top:597.3px;width:1.0px;height:29.100000000000023px;background:#8fae7a;"></div>
<div style="position:absolute;left:1259.4px;top:508.2px;width:108.89999999999986px;height:24.599999999999966px;background:#808080;"></div>
<div style="position:absolute;left:1258.7px;top:535.6px;width:110.0px;height:29.0px;background:#808080;"></div>
<div style="position:absolute;left:1258.7px;top:566.2px;width:110.0px;height:29.0px;background:#808080;"></div>
<div style="position:absolute;left:1257.7px;top:597.3px;width:111.0px;height:28.700000000000045px;background:#375623;"></div>
<div style="position:absolute;left:1257.2px;top:597.3px;width:1.0px;height:28.700000000000045px;background:#8fae7a;"></div>
<div style="position:absolute;left:56.2px;top:633.2px;width:120.60000000000001px;height:24.59999999999991px;background:#d9d9d9;"></div>
<div style="position:absolute;left:56.2px;top:660.9px;width:120.60000000000001px;height:27.899999999999977px;background:#d9d9d9;"></div>
<div style="position:absolute;left:56.2px;top:692px;width:120.60000000000001px;height:27.799999999999955px;background:#d9d9d9;"></div>
<div style="position:absolute;left:56.2px;top:722.6px;width:120.60000000000001px;height:28.100000000000023px;background:#d9d9d9;"></div>
<div style="position:absolute;left:178px;top:690px;width:1080px;height:1px;background:#e2e2e2;"></div>
<div style="position:absolute;left:178px;top:720.5px;width:1080px;height:1.0px;background:#e2e2e2;"></div>
<div style="position:absolute;left:179.2px;top:633.2px;width:87.10000000000002px;height:24.59999999999991px;background:#d9d9d9;"></div>
<div style="position:absolute;left:177.7px;top:722.3px;width:90.0px;height:29.100000000000023px;background:#375623;"></div>
<div style="position:absolute;left:269.2px;top:633.2px;width:87.10000000000002px;height:24.59999999999991px;background:#d9d9d9;"></div>
<div style="position:absolute;left:267.5px;top:660px;width:1.0px;height:61px;background:#e2e2e2;"></div>
<div style="position:absolute;left:267.7px;top:722.3px;width:90.0px;height:29.100000000000023px;background:#375623;"></div>
<div style="position:absolute;left:267.2px;top:722.3px;width:1.0px;height:29.100000000000023px;background:#8fae7a;"></div>
<div style="position:absolute;left:359.2px;top:633.2px;width:87.10000000000002px;height:24.59999999999991px;background:#d9d9d9;"></div>
<div style="position:absolute;left:357.5px;top:660px;width:1.0px;height:61px;background:#e2e2e2;"></div>
<div style="position:absolute;left:357.7px;top:722.3px;width:90.0px;height:29.100000000000023px;background:#375623;"></div>
<div style="position:absolute;left:357.2px;top:722.3px;width:1.0px;height:29.100000000000023px;background:#8fae7a;"></div>
<div style="position:absolute;left:449.2px;top:633.2px;width:87.09999999999997px;height:24.59999999999991px;background:#d9d9d9;"></div>
<div style="position:absolute;left:447.5px;top:660px;width:1.0px;height:61px;background:#e2e2e2;"></div>
<div style="position:absolute;left:447.7px;top:722.3px;width:90.00000000000006px;height:29.100000000000023px;background:#375623;"></div>
<div style="position:absolute;left:447.2px;top:722.3px;width:1.0px;height:29.100000000000023px;background:#8fae7a;"></div>
<div style="position:absolute;left:539.2px;top:633.2px;width:87.09999999999991px;height:24.59999999999991px;background:#d9d9d9;"></div>
<div style="position:absolute;left:537.5px;top:660px;width:1.0px;height:61px;background:#e2e2e2;"></div>
<div style="position:absolute;left:537.7px;top:722.3px;width:90.0px;height:29.100000000000023px;background:#375623;"></div>
<div style="position:absolute;left:537.2px;top:722.3px;width:1.0px;height:29.100000000000023px;background:#8fae7a;"></div>
<div style="position:absolute;left:629.2px;top:633.2px;width:87.09999999999991px;height:24.59999999999991px;background:#d9d9d9;"></div>
<div style="position:absolute;left:627.5px;top:660px;width:1.0px;height:61px;background:#e2e2e2;"></div>
<div style="position:absolute;left:627.7px;top:722.3px;width:90.0px;height:29.100000000000023px;background:#375623;"></div>
<div style="position:absolute;left:627.2px;top:722.3px;width:1.0px;height:29.100000000000023px;background:#8fae7a;"></div>
<div style="position:absolute;left:719.2px;top:633.2px;width:87.09999999999991px;height:24.59999999999991px;background:#d9d9d9;"></div>
<div style="position:absolute;left:717.5px;top:660px;width:1.0px;height:61px;background:#e2e2e2;"></div>
<div style="position:absolute;left:717.7px;top:722.3px;width:90.0px;height:29.100000000000023px;background:#cc0000;"></div>
<div style="position:absolute;left:717.2px;top:722.3px;width:1.0px;height:29.100000000000023px;background:#f2a9a0;"></div>
<div style="position:absolute;left:809.2px;top:633.2px;width:87.09999999999991px;height:24.59999999999991px;background:#d9d9d9;"></div>
<div style="position:absolute;left:807.5px;top:660px;width:1.0px;height:61px;background:#e2e2e2;"></div>
<div style="position:absolute;left:807.7px;top:722.3px;width:90.0px;height:29.100000000000023px;background:#375623;"></div>
<div style="position:absolute;left:807.2px;top:722.3px;width:1.0px;height:29.100000000000023px;background:#f2a9a0;"></div>
<div style="position:absolute;left:899.2px;top:633.2px;width:87.09999999999991px;height:24.59999999999991px;background:#d9d9d9;"></div>
<div style="position:absolute;left:897.5px;top:660px;width:1.0px;height:61px;background:#e2e2e2;"></div>
<div style="position:absolute;left:897.7px;top:722.3px;width:90.0px;height:29.100000000000023px;background:#375623;"></div>
<div style="position:absolute;left:897.2px;top:722.3px;width:1.0px;height:29.100000000000023px;background:#8fae7a;"></div>
<div style="position:absolute;left:989.2px;top:633.2px;width:87.09999999999991px;height:24.59999999999991px;background:#d9d9d9;"></div>
<div style="position:absolute;left:987.5px;top:660px;width:1.0px;height:61px;background:#e2e2e2;"></div>
<div style="position:absolute;left:987.7px;top:722.3px;width:90.0px;height:29.100000000000023px;background:#375623;"></div>
<div style="position:absolute;left:987.2px;top:722.3px;width:1.0px;height:29.100000000000023px;background:#8fae7a;"></div>
<div style="position:absolute;left:1079.2px;top:633.2px;width:87.09999999999991px;height:24.59999999999991px;background:#d9d9d9;"></div>
<div style="position:absolute;left:1077.5px;top:660px;width:1.0px;height:61px;background:#e2e2e2;"></div>
<div style="position:absolute;left:1077.7px;top:722.3px;width:90.0px;height:29.100000000000023px;background:#375623;"></div>
<div style="position:absolute;left:1077.2px;top:722.3px;width:1.0px;height:29.100000000000023px;background:#8fae7a;"></div>
<div style="position:absolute;left:1169.2px;top:633.2px;width:87.09999999999991px;height:24.59999999999991px;background:#d9d9d9;"></div>
<div style="position:absolute;left:1167.5px;top:660px;width:1.0px;height:61px;background:#e2e2e2;"></div>
<div style="position:absolute;left:1167.7px;top:722.3px;width:90.0px;height:29.100000000000023px;background:#375623;"></div>
<div style="position:absolute;left:1167.2px;top:722.3px;width:1.0px;height:29.100000000000023px;background:#8fae7a;"></div>
<div style="position:absolute;left:1259.4px;top:633.2px;width:108.89999999999986px;height:24.59999999999991px;background:#808080;"></div>
<div style="position:absolute;left:1258.7px;top:660.6px;width:110.0px;height:29.0px;background:#808080;"></div>
<div style="position:absolute;left:1258.7px;top:691.2px;width:110.0px;height:29.0px;background:#808080;"></div>
<div style="position:absolute;left:1257.7px;top:722.3px;width:111.0px;height:28.700000000000045px;background:#375623;"></div>
<div style="position:absolute;left:1257.2px;top:722.3px;width:1.0px;height:28.700000000000045px;background:#8fae7a;"></div>
<div style="position:absolute;left:1580px;top:224px;width:20px;height:569px;background:#e8e8e8;"></div>
<div style="position:absolute;left:1581px;top:225px;width:18px;height:568px;background:#f7f7f7;border-radius:9px;"></div>
<svg style="left:1585px;top:230px" width="10" height="7" viewBox="0 0 10 7"><path d="M0 6.5 L5 0.5 L10 6.5 Z" fill="#6a6a6a"/></svg>
<div style="position:absolute;left:1585px;top:241.3px;width:9.5px;height:17.5px;background:#707070;border-radius:5px;"></div>
<svg style="left:1585px;top:784px" width="10" height="7" viewBox="0 0 10 7"><path d="M0 0.5 L5 6.5 L10 0.5 Z" fill="#6a6a6a"/></svg>
<div style="position:absolute;left:0px;top:793px;width:1600px;height:34px;background:#e8e8e8;"></div>
<div style="position:absolute;left:15px;top:805.4px;width:2.3px;height:2.3px;border-radius:50%;background:#333;"></div>
<div style="position:absolute;left:15px;top:809.9px;width:2.3px;height:2.3px;border-radius:50%;background:#333;"></div>
<div style="position:absolute;left:15px;top:814.4px;width:2.3px;height:2.3px;border-radius:50%;background:#333;"></div>
<div style="position:absolute;left:33.7px;top:801px;width:1544px;height:18.7px;background:#f7f7f7;border-radius:9px;"></div>
<svg style="left:38px;top:805.5px" width="8" height="10" viewBox="0 0 8 10"><path d="M7.5 0 L0.5 5 L7.5 10 Z" fill="#6a6a6a"/></svg>
<div style="position:absolute;left:50.6px;top:805.6px;width:1475px;height:9.5px;background:#707070;border-radius:5px;"></div>
<svg style="left:1566px;top:806px" width="8" height="10" viewBox="0 0 8 10"><path d="M0.5 0 L7.5 5 L0.5 10 Z" fill="#6a6a6a"/></svg>
<div style="position:absolute;left:0px;top:827px;width:1600px;height:23px;background:#f3f3f3;"></div>
<div style="position:absolute;left:0px;top:826.5px;width:1600px;height:0.7999999999999545px;background:#d9d9d9;"></div>
<svg style="left:65px;top:832px" width="17" height="15" viewBox="0 0 17 15"><rect x="0.7" y="0.7" width="13" height="12" fill="none" stroke="#444" stroke-width="1.2"/><line x1="0.7" y1="3.5" x2="13.7" y2="3.5" stroke="#444" stroke-width="1.2"/><line x1="3" y1="6.5" x2="7" y2="6.5" stroke="#444" stroke-width="1"/><circle cx="11.5" cy="10" r="4" fill="#f3f3f3" stroke="#444" stroke-width="1.2"/><circle cx="11.5" cy="10" r="1.8" fill="#444"/></svg>
<svg style="left:99px;top:832px" width="16" height="15" viewBox="0 0 16 15"><circle cx="6.5" cy="2" r="1.6" fill="none" stroke="#444" stroke-width="1.1"/><path d="M1 4.5 C3 6 5 6 6.5 6 C8 6 10 6 12 4.5 M4.5 6.2 V9 L3 14 M8.5 6.2 V9 L9.5 12 M4.5 9 H8.5" fill="none" stroke="#444" stroke-width="1.2"/><path d="M10 10 L15 14.5 M15 10 L10 14.5" stroke="#444" stroke-width="1.2"/></svg>
<div style="position:absolute;left:1295px;top:828px;width:41.299999999999955px;height:22px;background:#dadada;"></div>
<svg style="left:1308px;top:832px" width="15" height="14" viewBox="0 0 15 14"><rect x="0.7" y="0.7" width="13.3" height="12.5" fill="none" stroke="#444" stroke-width="1.3"/><path d="M5.1 0.7 V13.2 M9.5 0.7 V13.2 M0.7 4.9 H14 M0.7 9 H14" stroke="#444" stroke-width="1.2"/></svg>
<svg style="left:1350px;top:832px" width="16" height="14" viewBox="0 0 16 14"><rect x="0.7" y="0.7" width="14" height="12.5" fill="none" stroke="#444" stroke-width="1.3"/><rect x="4" y="3" width="7.5" height="8" fill="none" stroke="#444" stroke-width="1.1"/><path d="M5.5 5.3 H10 M5.5 7 H10 M5.5 8.7 H10" stroke="#444" stroke-width="0.9"/></svg>
<svg style="left:1392px;top:832px" width="15" height="14" viewBox="0 0 15 14"><rect x="0.7" y="0.7" width="13.5" height="12.5" fill="none" stroke="#444" stroke-width="1.3"/><path d="M4.5 0.7 V7.5 H9.5 V0.7" fill="none" stroke="#444" stroke-width="1.2"/></svg>
<div style="position:absolute;left:1426.2px;top:838.2px;width:7.599999999999909px;height:1.099999999999909px;background:#444;"></div>
<div style="position:absolute;left:1439.5px;top:838.4px;width:103.5px;height:0.8000000000000682px;background:#777;"></div>
<div style="position:absolute;left:1483.7px;top:833.7px;width:5.0px;height:10.799999999999955px;background:#555;"></div>
<div style="position:absolute;left:1490.5px;top:835.5px;width:1.0px;height:7.0px;background:#777;"></div>
<div style="position:absolute;left:1548px;top:838.2px;width:8.299999999999955px;height:1.099999999999909px;background:#444;"></div>
<div style="position:absolute;left:1551.6px;top:834.6px;width:1.1000000000001364px;height:8.299999999999955px;background:#444;"></div>
<div class="t" style="left:50.60px;top:25.31px;font-size:11.81px;color:#eaf5ee;transform:scaleX(0.910);">Salvamento Automático</div>
<div class="t" style="left:375.91px;top:25.48px;font-size:12.32px;color:#eaf5ee;transform:scaleX(0.995);">Planilha de Planejamento Financeiro Empresarial v08</div>
<div class="t" style="left:748.74px;top:23.88px;font-size:14.06px;color:#2f6a4a;transform:scaleX(0.956);">Pesquisar</div>
<div class="t" style="left:1418.50px;top:25.39px;font-size:10.43px;color:#fbe6f8;transform:scaleX(0.869);">BM</div>
<div class="t" style="left:7.75px;top:66.53px;font-size:15.07px;color:#303030;transform:scaleX(0.957);">Arquivo</div>
<div class="t" style="left:70.32px;top:66.53px;font-size:15.07px;color:#303030;transform:scaleX(0.932);">Página Inicial</div>
<div class="t" style="left:173.30px;top:66.53px;font-size:15.07px;color:#303030;transform:scaleX(0.949);">Inserir</div>
<div class="t" style="left:233.32px;top:66.53px;font-size:15.07px;color:#303030;transform:scaleX(0.926);">Layout da Página</div>
<div class="t" style="left:364.06px;top:66.53px;font-size:15.07px;color:#303030;transform:scaleX(0.939);">Fórmulas</div>
<div class="t" style="left:441.55px;top:66.53px;font-size:15.07px;color:#303030;transform:scaleX(0.952);">Dados</div>
<div class="t" style="left:571.58px;top:66.53px;font-size:15.07px;color:#303030;transform:scaleX(0.921);">Exibir</div>
<div class="t" style="left:626.75px;top:66.53px;font-size:15.07px;color:#303030;transform:scaleX(0.968);">Automatizar</div>
<div class="t" style="left:725.32px;top:66.53px;font-size:15.07px;color:#303030;transform:scaleX(0.930);">Desenvolvedor</div>
<div class="t" style="left:840.00px;top:66.53px;font-size:15.07px;color:#303030;transform:scaleX(0.926);">Ajuda</div>
<div class="t" style="left:896.58px;top:66.53px;font-size:15.07px;color:#303030;transform:scaleX(0.920);">Power Pivot</div>
<div class="t" style="left:502.09px;top:66.53px;font-size:15.07px;color:#222;transform:scaleX(0.910);-webkit-text-stroke:0.45px #222;">Revisão</div>
<div class="t" style="left:1332.00px;top:66.53px;font-size:15.07px;color:#303030;transform:scaleX(0.949);">Comentários</div>
<div class="t" style="left:1449.50px;top:66.53px;font-size:15.07px;color:#ffffff;transform:scaleX(0.978);">Compartilhamento</div>
<div class="t" style="left:29.50px;top:132.43px;font-size:13.19px;color:#a0a0a0;transform:scaleX(0.917);">Verificar</div>
<div class="t" style="left:23.75px;top:148.93px;font-size:13.19px;color:#a0a0a0;transform:scaleX(0.949);">Ortografia</div>
<div class="t" style="left:95.26px;top:132.43px;font-size:13.19px;color:#2e2e2e;transform:scaleX(0.992);">Dicionário</div>
<div class="t" style="left:87.75px;top:148.93px;font-size:13.19px;color:#2e2e2e;transform:scaleX(0.931);">de Sinônimos</div>
<div class="t" style="left:178.50px;top:132.43px;font-size:13.19px;color:#2e2e2e;transform:scaleX(0.900);">Estatísticas da</div>
<div class="t" style="left:169.75px;top:148.93px;font-size:13.19px;color:#2e2e2e;transform:scaleX(0.952);">pasta de trabalho</div>
<div class="t" style="left:102.75px;top:174.23px;font-size:10.87px;color:#3d3d3d;transform:scaleX(0.981);">Revisão de Texto</div>
<div class="t" style="left:302.50px;top:132.43px;font-size:13.19px;color:#2e2e2e;transform:scaleX(0.922);">Verificar</div>
<div class="t" style="left:287.81px;top:148.93px;font-size:13.19px;color:#2e2e2e;transform:scaleX(0.940);">Desempenho</div>
<div class="t" style="left:292.00px;top:174.23px;font-size:10.87px;color:#3d3d3d;transform:scaleX(0.976);">Desempenho</div>
<div class="t" style="left:406.90px;top:133.93px;font-size:13.19px;color:#2e2e2e;transform:scaleX(0.924);">Verificar</div>
<div class="t" style="left:383.75px;top:150.18px;font-size:13.19px;color:#2e2e2e;transform:scaleX(0.945);">Acessibilidade</div>
<div class="t" style="left:393.50px;top:174.23px;font-size:10.87px;color:#3d3d3d;transform:scaleX(0.986);">Acessibilidade</div>
<div class="t" style="left:496.90px;top:132.43px;font-size:13.19px;color:#2e2e2e;transform:scaleX(0.901);">Traduzir</div>
<div class="t" style="left:500.00px;top:174.23px;font-size:10.87px;color:#3d3d3d;">Idioma</div>
<div class="t" style="left:568.55px;top:132.43px;font-size:13.19px;color:#a0a0a0;transform:scaleX(0.953);">Mostrar</div>
<div class="t" style="left:562.50px;top:148.93px;font-size:13.19px;color:#a0a0a0;transform:scaleX(0.922);">alterações</div>
<div class="t" style="left:564.30px;top:174.23px;font-size:10.87px;color:#3d3d3d;transform:scaleX(0.970);">Alterações</div>
<div class="t" style="left:657.39px;top:132.43px;font-size:13.19px;color:#2e2e2e;transform:scaleX(1.005);">Novo</div>
<div class="t" style="left:641.30px;top:148.93px;font-size:13.19px;color:#2e2e2e;transform:scaleX(0.939);">Comentário</div>
<div class="t" style="left:712.59px;top:132.43px;font-size:13.19px;color:#a0a0a0;transform:scaleX(0.906);">Excluir</div>
<div class="t" style="left:757.60px;top:132.43px;font-size:13.19px;color:#a0a0a0;transform:scaleX(0.955);">Comentário</div>
<div class="t" style="left:768.00px;top:148.93px;font-size:13.19px;color:#a0a0a0;transform:scaleX(0.940);">Anterior</div>
<div class="t" style="left:837.03px;top:132.43px;font-size:13.19px;color:#a0a0a0;transform:scaleX(0.970);">Próximo</div>
<div class="t" style="left:829.00px;top:148.93px;font-size:13.19px;color:#a0a0a0;transform:scaleX(0.948);">Comentário</div>
<div class="t" style="left:913.46px;top:132.43px;font-size:13.19px;color:#2e2e2e;transform:scaleX(0.945);">Mostrar</div>
<div class="t" style="left:901.00px;top:148.93px;font-size:13.19px;color:#2e2e2e;transform:scaleX(0.926);">Comentários</div>
<div class="t" style="left:774.40px;top:174.23px;font-size:10.87px;color:#3d3d3d;transform:scaleX(0.983);">Comentários</div>
<div class="t" style="left:993.10px;top:132.43px;font-size:13.19px;color:#2e2e2e;transform:scaleX(0.917);">Anotações</div>
<div class="t" style="left:995.60px;top:174.23px;font-size:10.87px;color:#3d3d3d;transform:scaleX(0.957);">Anotações</div>
<div class="t" style="left:1071.85px;top:132.43px;font-size:13.19px;color:#2e2e2e;transform:scaleX(0.955);">Desproteger</div>
<div class="t" style="left:1085.30px;top:148.93px;font-size:13.19px;color:#2e2e2e;transform:scaleX(0.952);">planilha</div>
<div class="t" style="left:1147.50px;top:132.43px;font-size:13.19px;color:#2e2e2e;transform:scaleX(0.897);">Proteger Pasta</div>
<div class="t" style="left:1155.00px;top:148.93px;font-size:13.19px;color:#2e2e2e;transform:scaleX(0.939);">de Trabalho</div>
<div class="t" style="left:1233.87px;top:132.43px;font-size:13.19px;color:#a0a0a0;transform:scaleX(0.934);">Permitir a Edição</div>
<div class="t" style="left:1245.00px;top:148.93px;font-size:13.19px;color:#a0a0a0;transform:scaleX(0.933);">de Intervalos</div>
<div class="t" style="left:1335.75px;top:132.43px;font-size:13.19px;color:#a0a0a0;transform:scaleX(0.954);">Descompartilhar</div>
<div class="t" style="left:1333.08px;top:148.93px;font-size:13.19px;color:#a0a0a0;transform:scaleX(0.917);">Pasta de Trabalho</div>
<div class="t" style="left:1230.40px;top:174.23px;font-size:10.87px;color:#3d3d3d;transform:scaleX(0.990);">Proteger</div>
<div class="t" style="left:1453.75px;top:133.93px;font-size:13.19px;color:#2e2e2e;transform:scaleX(0.913);">Ocultar</div>
<div class="t" style="left:1454.40px;top:150.18px;font-size:13.19px;color:#2e2e2e;transform:scaleX(0.868);">Tinta</div>
<div class="t" style="left:1461.50px;top:174.23px;font-size:10.87px;color:#3d3d3d;transform:scaleX(0.901);">Tinta</div>
<div class="t" style="left:38.70px;top:97.48px;font-size:14.5px;color:#a8a8a8;transform:scaleX(1.055);">abc</div>
<div class="t" style="left:212.53px;top:114.13px;font-size:15.5px;color:#3a8cc9;transform:scaleX(0.771);">123</div>
<div class="t" style="left:502.71px;top:110.76px;font-size:23.5px;color:#2b7fc4;transform:scaleX(0.792);">a</div>
<div class="t" style="left:13.54px;top:205.13px;font-size:13.48px;color:#1a1a1a;transform:scaleX(0.957);">D4</div>
<div class="t" style="left:253.10px;top:204.11px;font-size:17px;color:#222;font-family:'Liberation Serif';font-style:italic;transform:scaleX(1.195);">fx</div>
<div class="t" style="left:302.40px;top:204.98px;font-size:13.33px;color:#1a1a1a;">Otimista</div>
<div class="t" style="left:31.00px;top:234.38px;font-size:12.61px;color:#222;">A</div>
<div class="t" style="left:44.25px;top:234.38px;font-size:12.61px;color:#222;">B</div>
<div class="t" style="left:111.75px;top:234.38px;font-size:12.61px;color:#222;">C</div>
<div class="t" style="left:218.00px;top:234.38px;font-size:12.61px;color:#1e5a37;">D</div>
<div class="t" style="left:308.50px;top:234.38px;font-size:12.61px;color:#222;">E</div>
<div class="t" style="left:398.50px;top:234.38px;font-size:12.61px;color:#222;">F</div>
<div class="t" style="left:488.50px;top:234.38px;font-size:12.61px;color:#222;">G</div>
<div class="t" style="left:578.00px;top:234.38px;font-size:12.61px;color:#222;">H</div>
<div class="t" style="left:671.00px;top:234.38px;font-size:12.61px;color:#222;">I</div>
<div class="t" style="left:760.00px;top:234.38px;font-size:12.61px;color:#222;">J</div>
<div class="t" style="left:848.00px;top:234.38px;font-size:12.61px;color:#222;">K</div>
<div class="t" style="left:939.00px;top:234.38px;font-size:12.61px;color:#222;">L</div>
<div class="t" style="left:1027.50px;top:234.38px;font-size:12.61px;color:#222;">M</div>
<div class="t" style="left:1118.00px;top:234.38px;font-size:12.61px;color:#222;">N</div>
<div class="t" style="left:1208.00px;top:234.38px;font-size:12.61px;color:#222;">O</div>
<div class="t" style="left:1309.50px;top:234.38px;font-size:12.61px;color:#222;">P</div>
<div class="t" style="left:1405.00px;top:234.38px;font-size:12.61px;color:#222;">Q</div>
<div class="t" style="left:1485.00px;top:234.38px;font-size:12.61px;color:#222;">R</div>
<div class="t" style="left:1566.00px;top:234.38px;font-size:12.61px;color:#222;">S</div>
<div style="position:absolute;left:0px;top:244px;width:28px;height:47.5px;overflow:hidden"><div class="t" style="left:10.70px;top:40.18px;font-size:12.46px;color:#222;">1</div></div>
<div style="position:absolute;left:0px;top:292px;width:28px;height:37.5px;overflow:hidden"><div class="t" style="left:10.70px;top:30.18px;font-size:12.46px;color:#222;">2</div></div>
<div style="position:absolute;left:0px;top:330px;width:28px;height:15.5px;overflow:hidden"><div class="t" style="left:10.70px;top:8.18px;font-size:12.46px;color:#222;">3</div></div>
<div style="position:absolute;left:0px;top:346px;width:28px;height:25.5px;overflow:hidden"><div class="t" style="left:10.70px;top:18.18px;font-size:12.46px;color:#1e5a37;">4</div></div>
<div style="position:absolute;left:0px;top:372px;width:28px;height:9.5px;overflow:hidden"><div class="t" style="left:10.70px;top:2.18px;font-size:12.46px;color:#222;">5</div></div>
<div style="position:absolute;left:0px;top:382px;width:28px;height:26.5px;overflow:hidden"><div class="t" style="left:10.70px;top:19.18px;font-size:12.46px;color:#222;">6</div></div>
<div style="position:absolute;left:0px;top:409px;width:28px;height:30.5px;overflow:hidden"><div class="t" style="left:10.70px;top:23.18px;font-size:12.46px;color:#222;">7</div></div>
<div style="position:absolute;left:0px;top:440px;width:28px;height:30.5px;overflow:hidden"><div class="t" style="left:10.70px;top:23.18px;font-size:12.46px;color:#222;">8</div></div>
<div style="position:absolute;left:0px;top:471px;width:28px;height:30.5px;overflow:hidden"><div class="t" style="left:10.70px;top:23.18px;font-size:12.46px;color:#222;">9</div></div>
<div style="position:absolute;left:0px;top:502px;width:28px;height:4.5px;overflow:hidden"><div class="t" style="left:7.24px;top:-2.82px;font-size:12.46px;color:#222;">10</div></div>
<div style="position:absolute;left:0px;top:507px;width:28px;height:26.5px;overflow:hidden"><div class="t" style="left:7.70px;top:19.18px;font-size:12.46px;color:#222;">11</div></div>
<div style="position:absolute;left:0px;top:534px;width:28px;height:30.5px;overflow:hidden"><div class="t" style="left:7.24px;top:23.18px;font-size:12.46px;color:#222;">12</div></div>
<div style="position:absolute;left:0px;top:565px;width:28px;height:30.5px;overflow:hidden"><div class="t" style="left:7.24px;top:23.18px;font-size:12.46px;color:#222;">13</div></div>
<div style="position:absolute;left:0px;top:596px;width:28px;height:30.5px;overflow:hidden"><div class="t" style="left:7.24px;top:23.18px;font-size:12.46px;color:#222;">14</div></div>
<div style="position:absolute;left:0px;top:627px;width:28px;height:4.5px;overflow:hidden"><div class="t" style="left:7.24px;top:-2.82px;font-size:12.46px;color:#222;">15</div></div>
<div style="position:absolute;left:0px;top:632px;width:28px;height:26.5px;overflow:hidden"><div class="t" style="left:7.24px;top:19.18px;font-size:12.46px;color:#222;">16</div></div>
<div style="position:absolute;left:0px;top:659px;width:28px;height:30.5px;overflow:hidden"><div class="t" style="left:7.24px;top:23.18px;font-size:12.46px;color:#222;">17</div></div>
<div style="position:absolute;left:0px;top:690px;width:28px;height:30.5px;overflow:hidden"><div class="t" style="left:7.24px;top:23.18px;font-size:12.46px;color:#222;">18</div></div>
<div style="position:absolute;left:0px;top:721px;width:28px;height:30.5px;overflow:hidden"><div class="t" style="left:7.24px;top:23.18px;font-size:12.46px;color:#222;">19</div></div>
<div style="position:absolute;left:0px;top:752px;width:28px;height:37.5px;overflow:hidden"><div class="t" style="left:7.24px;top:30.18px;font-size:12.46px;color:#222;">20</div></div>
<div class="t" style="left:187.00px;top:268.73px;font-size:13.19px;color:#0d0d0d;font-weight:700;transform:scaleX(0.841);-webkit-text-stroke:0.2px #0d0d0d;">CADASTRO</div>
<div class="t" style="left:285.00px;top:268.73px;font-size:13.19px;color:#ffffff;font-weight:700;transform:scaleX(0.865);-webkit-text-stroke:0.2px #ffffff;">PLANEJAMENTO FINANCEIRO</div>
<div class="t" style="left:479.75px;top:268.73px;font-size:13.19px;color:#0d0d0d;font-weight:700;transform:scaleX(0.852);-webkit-text-stroke:0.2px #0d0d0d;">CONTROLE FINANCEIRO</div>
<div class="t" style="left:644.40px;top:268.73px;font-size:13.19px;color:#0d0d0d;font-weight:700;transform:scaleX(0.831);-webkit-text-stroke:0.2px #0d0d0d;">RELATÓRIOS</div>
<div class="t" style="left:744.40px;top:268.73px;font-size:13.19px;color:#0d0d0d;font-weight:700;transform:scaleX(0.840);-webkit-text-stroke:0.2px #0d0d0d;">DASHBOARDS</div>
<div class="t" style="left:851.60px;top:268.73px;font-size:13.19px;color:#0d0d0d;font-weight:700;transform:scaleX(0.828);-webkit-text-stroke:0.2px #0d0d0d;">INSTRUÇÕES</div>
<div class="t" style="left:169.70px;top:316.93px;font-size:13.19px;color:#ffffff;font-weight:700;transform:scaleX(0.884);-webkit-text-stroke:0.2px #ffffff;">METAS</div>
<div class="t" style="left:268.70px;top:316.93px;font-size:13.19px;color:#404040;font-weight:700;transform:scaleX(0.832);-webkit-text-stroke:0.2px #404040;">CENÁRIOS</div>
<div class="t" style="left:29.50px;top:337.08px;font-size:14.78px;color:#000;font-weight:700;transform:scaleX(1.015);-webkit-text-stroke:0.9px #000;">SHEETS TECH</div>
<div class="t" style="left:69.00px;top:359.63px;font-size:12.9px;color:#0d0d0d;font-weight:700;transform:scaleX(0.946);-webkit-text-stroke:0.25px #0d0d0d;">Tipo de cenário</div>
<div class="t" style="left:192.80px;top:359.61px;font-size:12.68px;color:#e2efda;transform:scaleX(1.038);">Otimista</div>
<div class="t" style="left:372.90px;top:358.93px;font-size:12.9px;color:#0d0d0d;font-weight:700;transform:scaleX(0.935);-webkit-text-stroke:0.25px #0d0d0d;">Variação nas receitas</div>
<div class="t" style="left:553.40px;top:359.08px;font-size:12.46px;color:#262626;transform:scaleX(0.950);">10%</div>
<div class="t" style="left:732.80px;top:358.93px;font-size:12.9px;color:#0d0d0d;font-weight:700;transform:scaleX(0.928);-webkit-text-stroke:0.25px #0d0d0d;">Variação nas depesas</div>
<div class="t" style="left:913.40px;top:359.08px;font-size:12.46px;color:#262626;transform:scaleX(0.950);">10%</div>
<div class="t" style="left:69.70px;top:396.48px;font-size:12.46px;color:#0d0d0d;font-weight:700;-webkit-text-stroke:0.25px #0d0d0d;">Meses</div>
<div class="t" style="left:69.70px;top:425.48px;font-size:12.46px;color:#0d0d0d;font-weight:700;transform:scaleX(0.969);-webkit-text-stroke:0.25px #0d0d0d;">Receitas ano 1</div>
<div class="t" style="left:69.70px;top:456.28px;font-size:12.46px;color:#0d0d0d;font-weight:700;transform:scaleX(0.960);-webkit-text-stroke:0.25px #0d0d0d;">Despesas ano 1</div>
<div class="t" style="left:69.70px;top:486.78px;font-size:12.46px;color:#0d0d0d;font-weight:700;transform:scaleX(0.974);-webkit-text-stroke:0.25px #0d0d0d;">Resultado ano 1</div>
<div class="t" style="left:192.20px;top:396.28px;font-size:12.75px;color:#0d0d0d;font-weight:700;transform:scaleX(0.944);-webkit-text-stroke:0.25px #0d0d0d;">Janeiro</div>
<div class="t" style="left:192.00px;top:425.69px;font-size:10.43px;color:#262626;transform:scaleX(0.986);">R$ 9.900,00</div>
<div class="t" style="left:192.00px;top:456.69px;font-size:10.43px;color:#262626;transform:scaleX(0.986);">R$ 9.000,00</div>
<div class="t" style="left:192.00px;top:487.89px;font-size:10.72px;color:#e4efda;transform:scaleX(0.962);">R$900</div>
<div class="t" style="left:282.20px;top:396.28px;font-size:12.75px;color:#0d0d0d;font-weight:700;transform:scaleX(0.979);-webkit-text-stroke:0.25px #0d0d0d;">Fevereiro</div>
<div class="t" style="left:282.00px;top:425.69px;font-size:10.43px;color:#262626;transform:scaleX(0.986);">R$ 11.000,00</div>
<div class="t" style="left:282.00px;top:456.69px;font-size:10.43px;color:#262626;transform:scaleX(0.986);">R$ 5.985,00</div>
<div class="t" style="left:282.00px;top:487.89px;font-size:10.72px;color:#e4efda;transform:scaleX(0.962);">R$5.015</div>
<div class="t" style="left:372.20px;top:396.28px;font-size:12.75px;color:#0d0d0d;font-weight:700;transform:scaleX(0.985);-webkit-text-stroke:0.25px #0d0d0d;">Março</div>
<div class="t" style="left:372.00px;top:425.69px;font-size:10.43px;color:#262626;transform:scaleX(0.986);">R$ 5.500,00</div>
<div class="t" style="left:372.00px;top:456.69px;font-size:10.43px;color:#262626;transform:scaleX(0.986);">R$ 4.275,00</div>
<div class="t" style="left:372.00px;top:487.89px;font-size:10.72px;color:#e4efda;transform:scaleX(0.962);">R$1.225</div>
<div class="t" style="left:462.20px;top:396.28px;font-size:12.75px;color:#0d0d0d;font-weight:700;transform:scaleX(0.940);-webkit-text-stroke:0.25px #0d0d0d;">Abril</div>
<div class="t" style="left:462.00px;top:425.69px;font-size:10.43px;color:#262626;transform:scaleX(0.986);">R$ 16.500,00</div>
<div class="t" style="left:462.00px;top:456.69px;font-size:10.43px;color:#262626;transform:scaleX(0.986);">R$ 6.300,00</div>
<div class="t" style="left:462.00px;top:487.89px;font-size:10.72px;color:#e4efda;transform:scaleX(0.962);">R$10.200</div>
<div class="t" style="left:552.20px;top:396.28px;font-size:12.75px;color:#0d0d0d;font-weight:700;transform:scaleX(1.022);-webkit-text-stroke:0.25px #0d0d0d;">Maio</div>
<div class="t" style="left:552.00px;top:425.69px;font-size:10.43px;color:#262626;transform:scaleX(0.986);">R$ 9.900,00</div>
<div class="t" style="left:552.00px;top:456.69px;font-size:10.43px;color:#262626;transform:scaleX(0.986);">R$ 7.695,00</div>
<div class="t" style="left:552.00px;top:487.89px;font-size:10.72px;color:#e4efda;transform:scaleX(0.962);">R$2.205</div>
<div class="t" style="left:642.20px;top:396.28px;font-size:12.75px;color:#0d0d0d;font-weight:700;transform:scaleX(0.910);-webkit-text-stroke:0.25px #0d0d0d;">Junho</div>
<div class="t" style="left:642.00px;top:425.69px;font-size:10.43px;color:#262626;transform:scaleX(0.986);">R$ 6.050,00</div>
<div class="t" style="left:642.00px;top:456.69px;font-size:10.43px;color:#262626;transform:scaleX(0.986);">R$ 4.500,00</div>
<div class="t" style="left:642.00px;top:487.89px;font-size:10.72px;color:#e4efda;transform:scaleX(0.962);">R$1.550</div>
<div class="t" style="left:732.20px;top:396.28px;font-size:12.75px;color:#0d0d0d;font-weight:700;transform:scaleX(0.918);-webkit-text-stroke:0.25px #0d0d0d;">Julho</div>
<div class="t" style="left:732.00px;top:425.69px;font-size:10.43px;color:#262626;transform:scaleX(0.986);">R$ 10.450,00</div>
<div class="t" style="left:732.00px;top:456.69px;font-size:10.43px;color:#262626;transform:scaleX(0.986);">R$ 4.500,00</div>
<div class="t" style="left:732.00px;top:487.89px;font-size:10.72px;color:#e4efda;transform:scaleX(0.962);">R$5.950</div>
<div class="t" style="left:822.20px;top:396.28px;font-size:12.75px;color:#0d0d0d;font-weight:700;transform:scaleX(0.929);-webkit-text-stroke:0.25px #0d0d0d;">Agosto</div>
<div class="t" style="left:822.00px;top:425.69px;font-size:10.43px;color:#262626;transform:scaleX(0.986);">R$ 7.700,00</div>
<div class="t" style="left:822.00px;top:456.69px;font-size:10.43px;color:#262626;transform:scaleX(0.986);">R$ 5.985,00</div>
<div class="t" style="left:822.00px;top:487.89px;font-size:10.72px;color:#e4efda;transform:scaleX(0.962);">R$1.715</div>
<div class="t" style="left:912.20px;top:396.28px;font-size:12.75px;color:#0d0d0d;font-weight:700;transform:scaleX(0.986);-webkit-text-stroke:0.25px #0d0d0d;">Setembro</div>
<div class="t" style="left:912.00px;top:425.69px;font-size:10.43px;color:#262626;transform:scaleX(0.986);">R$ 7.150,00</div>
<div class="t" style="left:912.00px;top:456.69px;font-size:10.43px;color:#262626;transform:scaleX(0.986);">R$ 5.557,50</div>
<div class="t" style="left:912.00px;top:487.89px;font-size:10.72px;color:#e4efda;transform:scaleX(0.962);">R$1.593</div>
<div class="t" style="left:1002.20px;top:396.28px;font-size:12.75px;color:#0d0d0d;font-weight:700;transform:scaleX(0.994);-webkit-text-stroke:0.25px #0d0d0d;">Outubro</div>
<div class="t" style="left:1002.00px;top:425.69px;font-size:10.43px;color:#262626;transform:scaleX(0.986);">R$ 8.800,00</div>
<div class="t" style="left:1002.00px;top:456.69px;font-size:10.43px;color:#262626;transform:scaleX(0.986);">R$ 4.050,00</div>
<div class="t" style="left:1002.00px;top:487.89px;font-size:10.72px;color:#e4efda;transform:scaleX(0.962);">R$4.750</div>
<div class="t" style="left:1092.20px;top:396.28px;font-size:12.75px;color:#0d0d0d;font-weight:700;transform:scaleX(0.986);-webkit-text-stroke:0.25px #0d0d0d;">Novembro</div>
<div class="t" style="left:1092.00px;top:425.69px;font-size:10.43px;color:#262626;transform:scaleX(0.986);">R$ 4.400,00</div>
<div class="t" style="left:1092.00px;top:456.69px;font-size:10.43px;color:#262626;transform:scaleX(0.986);">R$ 3.420,00</div>
<div class="t" style="left:1092.00px;top:487.89px;font-size:10.72px;color:#e4efda;transform:scaleX(0.962);">R$980</div>
<div class="t" style="left:1182.20px;top:396.28px;font-size:12.75px;color:#0d0d0d;font-weight:700;-webkit-text-stroke:0.25px #0d0d0d;">Dezembro</div>
<div class="t" style="left:1182.00px;top:425.69px;font-size:10.43px;color:#262626;transform:scaleX(0.986);">R$ 10.230,00</div>
<div class="t" style="left:1182.00px;top:456.69px;font-size:10.43px;color:#262626;transform:scaleX(0.986);">R$ 5.985,00</div>
<div class="t" style="left:1182.00px;top:487.89px;font-size:10.72px;color:#e4efda;transform:scaleX(0.962);">R$4.245</div>
<div class="t" style="left:1272.00px;top:396.28px;font-size:12.75px;color:#f2f2f2;font-weight:700;transform:scaleX(1.011);-webkit-text-stroke:0.2px #f2f2f2;">Total</div>
<div class="t" style="left:1272.50px;top:425.69px;font-size:10.43px;color:#f0f0f0;transform:scaleX(0.986);">R$ 107.580,00</div>
<div class="t" style="left:1272.50px;top:456.69px;font-size:10.43px;color:#f0f0f0;transform:scaleX(0.986);">R$ 67.252,50</div>
<div class="t" style="left:1272.50px;top:487.89px;font-size:10.72px;color:#e4efda;transform:scaleX(0.962);">R$ 40.327,50</div>
<div class="t" style="left:69.70px;top:521.48px;font-size:12.46px;color:#0d0d0d;font-weight:700;-webkit-text-stroke:0.25px #0d0d0d;">Meses</div>
<div class="t" style="left:69.70px;top:550.48px;font-size:12.46px;color:#0d0d0d;font-weight:700;transform:scaleX(0.969);-webkit-text-stroke:0.25px #0d0d0d;">Receitas ano 2</div>
<div class="t" style="left:69.70px;top:581.28px;font-size:12.46px;color:#0d0d0d;font-weight:700;transform:scaleX(0.960);-webkit-text-stroke:0.25px #0d0d0d;">Despesas ano 2</div>
<div class="t" style="left:69.70px;top:611.78px;font-size:12.46px;color:#0d0d0d;font-weight:700;transform:scaleX(0.974);-webkit-text-stroke:0.25px #0d0d0d;">Resultado ano 2</div>
<div class="t" style="left:192.20px;top:521.28px;font-size:12.75px;color:#0d0d0d;font-weight:700;transform:scaleX(0.944);-webkit-text-stroke:0.25px #0d0d0d;">Janeiro</div>
<div class="t" style="left:192.00px;top:550.69px;font-size:10.43px;color:#262626;transform:scaleX(0.986);">R$ 11.000,00</div>
<div class="t" style="left:192.00px;top:581.69px;font-size:10.43px;color:#262626;transform:scaleX(0.986);">R$ 7.695,00</div>
<div class="t" style="left:192.00px;top:612.89px;font-size:10.72px;color:#e4efda;transform:scaleX(0.962);">R$3.305</div>
<div class="t" style="left:282.20px;top:521.28px;font-size:12.75px;color:#0d0d0d;font-weight:700;transform:scaleX(0.979);-webkit-text-stroke:0.25px #0d0d0d;">Fevereiro</div>
<div class="t" style="left:282.00px;top:550.69px;font-size:10.43px;color:#262626;transform:scaleX(0.986);">R$ 13.200,00</div>
<div class="t" style="left:282.00px;top:581.69px;font-size:10.43px;color:#262626;transform:scaleX(0.986);">R$ 5.985,00</div>
<div class="t" style="left:282.00px;top:612.89px;font-size:10.72px;color:#e4efda;transform:scaleX(0.962);">R$7.215</div>
<div class="t" style="left:372.20px;top:521.28px;font-size:12.75px;color:#0d0d0d;font-weight:700;transform:scaleX(0.985);-webkit-text-stroke:0.25px #0d0d0d;">Março</div>
<div class="t" style="left:372.00px;top:550.69px;font-size:10.43px;color:#262626;transform:scaleX(0.986);">R$ 5.500,00</div>
<div class="t" style="left:372.00px;top:581.69px;font-size:10.43px;color:#262626;transform:scaleX(0.986);">R$ 4.275,00</div>
<div class="t" style="left:372.00px;top:612.89px;font-size:10.72px;color:#e4efda;transform:scaleX(0.962);">R$1.225</div>
<div class="t" style="left:462.20px;top:521.28px;font-size:12.75px;color:#0d0d0d;font-weight:700;transform:scaleX(0.940);-webkit-text-stroke:0.25px #0d0d0d;">Abril</div>
<div class="t" style="left:462.00px;top:550.69px;font-size:10.43px;color:#262626;transform:scaleX(0.986);">R$ 8.800,00</div>
<div class="t" style="left:462.00px;top:581.69px;font-size:10.43px;color:#262626;transform:scaleX(0.986);">R$ 6.300,00</div>
<div class="t" style="left:462.00px;top:612.89px;font-size:10.72px;color:#e4efda;transform:scaleX(0.962);">R$2.500</div>
<div class="t" style="left:552.20px;top:521.28px;font-size:12.75px;color:#0d0d0d;font-weight:700;transform:scaleX(1.022);-webkit-text-stroke:0.25px #0d0d0d;">Maio</div>
<div class="t" style="left:552.00px;top:550.69px;font-size:10.43px;color:#262626;transform:scaleX(0.986);">R$ 9.900,00</div>
<div class="t" style="left:552.00px;top:581.69px;font-size:10.43px;color:#262626;transform:scaleX(0.986);">R$ 7.695,00</div>
<div class="t" style="left:552.00px;top:612.89px;font-size:10.72px;color:#e4efda;transform:scaleX(0.962);">R$2.205</div>
<div class="t" style="left:642.20px;top:521.28px;font-size:12.75px;color:#0d0d0d;font-weight:700;transform:scaleX(0.910);-webkit-text-stroke:0.25px #0d0d0d;">Junho</div>
<div class="t" style="left:642.00px;top:550.69px;font-size:10.43px;color:#262626;transform:scaleX(0.986);">R$ 6.050,00</div>
<div class="t" style="left:642.00px;top:581.69px;font-size:10.43px;color:#262626;transform:scaleX(0.986);">R$ 4.500,00</div>
<div class="t" style="left:642.00px;top:612.89px;font-size:10.72px;color:#e4efda;transform:scaleX(0.962);">R$1.550</div>
<div class="t" style="left:732.20px;top:521.28px;font-size:12.75px;color:#0d0d0d;font-weight:700;transform:scaleX(0.918);-webkit-text-stroke:0.25px #0d0d0d;">Julho</div>
<div class="t" style="left:732.00px;top:550.69px;font-size:10.43px;color:#262626;transform:scaleX(0.986);">R$ 6.600,00</div>
<div class="t" style="left:732.00px;top:581.69px;font-size:10.43px;color:#262626;transform:scaleX(0.986);">R$ 9.000,00</div>
<div class="t" style="left:731.70px;top:612.89px;font-size:10.72px;color:#f8e0e0;transform:scaleX(0.986);">-R$2.400</div>
<div class="t" style="left:822.20px;top:521.28px;font-size:12.75px;color:#0d0d0d;font-weight:700;transform:scaleX(0.929);-webkit-text-stroke:0.25px #0d0d0d;">Agosto</div>
<div class="t" style="left:822.00px;top:550.69px;font-size:10.43px;color:#262626;transform:scaleX(0.986);">R$ 9.900,00</div>
<div class="t" style="left:822.00px;top:581.69px;font-size:10.43px;color:#262626;transform:scaleX(0.986);">R$ 5.985,00</div>
<div class="t" style="left:822.00px;top:612.89px;font-size:10.72px;color:#e4efda;transform:scaleX(0.962);">R$3.915</div>
<div class="t" style="left:912.20px;top:521.28px;font-size:12.75px;color:#0d0d0d;font-weight:700;transform:scaleX(0.986);-webkit-text-stroke:0.25px #0d0d0d;">Setembro</div>
<div class="t" style="left:912.00px;top:550.69px;font-size:10.43px;color:#262626;transform:scaleX(0.986);">R$ 9.900,00</div>
<div class="t" style="left:912.00px;top:581.69px;font-size:10.43px;color:#262626;transform:scaleX(0.986);">R$ 5.557,50</div>
<div class="t" style="left:912.00px;top:612.89px;font-size:10.72px;color:#e4efda;transform:scaleX(0.962);">R$4.343</div>
<div class="t" style="left:1002.20px;top:521.28px;font-size:12.75px;color:#0d0d0d;font-weight:700;transform:scaleX(0.994);-webkit-text-stroke:0.25px #0d0d0d;">Outubro</div>
<div class="t" style="left:1002.00px;top:550.69px;font-size:10.43px;color:#262626;transform:scaleX(0.986);">R$ 9.900,00</div>
<div class="t" style="left:1002.00px;top:581.69px;font-size:10.43px;color:#262626;transform:scaleX(0.986);">R$ 4.050,00</div>
<div class="t" style="left:1002.00px;top:612.89px;font-size:10.72px;color:#e4efda;transform:scaleX(0.962);">R$5.850</div>
<div class="t" style="left:1092.20px;top:521.28px;font-size:12.75px;color:#0d0d0d;font-weight:700;transform:scaleX(0.986);-webkit-text-stroke:0.25px #0d0d0d;">Novembro</div>
<div class="t" style="left:1092.00px;top:550.69px;font-size:10.43px;color:#262626;transform:scaleX(0.986);">R$ 4.400,00</div>
<div class="t" style="left:1092.00px;top:581.69px;font-size:10.43px;color:#262626;transform:scaleX(0.986);">R$ 3.420,00</div>
<div class="t" style="left:1092.00px;top:612.89px;font-size:10.72px;color:#e4efda;transform:scaleX(0.962);">R$980</div>
<div class="t" style="left:1182.20px;top:521.28px;font-size:12.75px;color:#0d0d0d;font-weight:700;-webkit-text-stroke:0.25px #0d0d0d;">Dezembro</div>
<div class="t" style="left:1182.00px;top:550.69px;font-size:10.43px;color:#262626;transform:scaleX(0.986);">R$ 7.700,00</div>
<div class="t" style="left:1182.00px;top:581.69px;font-size:10.43px;color:#262626;transform:scaleX(0.986);">R$ 5.985,00</div>
<div class="t" style="left:1182.00px;top:612.89px;font-size:10.72px;color:#e4efda;transform:scaleX(0.962);">R$1.715</div>
<div class="t" style="left:1272.00px;top:521.28px;font-size:12.75px;color:#f2f2f2;font-weight:700;transform:scaleX(1.011);-webkit-text-stroke:0.2px #f2f2f2;">Total</div>
<div class="t" style="left:1272.50px;top:550.69px;font-size:10.43px;color:#f0f0f0;transform:scaleX(0.986);">R$ 102.850,00</div>
<div class="t" style="left:1272.50px;top:581.69px;font-size:10.43px;color:#f0f0f0;transform:scaleX(0.986);">R$ 70.447,50</div>
<div class="t" style="left:1272.50px;top:612.89px;font-size:10.72px;color:#e4efda;transform:scaleX(0.962);">R$ 32.402,50</div>
<div class="t" style="left:69.70px;top:646.48px;font-size:12.46px;color:#0d0d0d;font-weight:700;-webkit-text-stroke:0.25px #0d0d0d;">Meses</div>
<div class="t" style="left:69.70px;top:675.48px;font-size:12.46px;color:#0d0d0d;font-weight:700;transform:scaleX(0.969);-webkit-text-stroke:0.25px #0d0d0d;">Receitas ano 3</div>
<div class="t" style="left:69.70px;top:706.28px;font-size:12.46px;color:#0d0d0d;font-weight:700;transform:scaleX(0.960);-webkit-text-stroke:0.25px #0d0d0d;">Despesas ano 3</div>
<div class="t" style="left:69.70px;top:736.78px;font-size:12.46px;color:#0d0d0d;font-weight:700;transform:scaleX(0.974);-webkit-text-stroke:0.25px #0d0d0d;">Resultado ano 3</div>
<div class="t" style="left:192.20px;top:646.28px;font-size:12.75px;color:#0d0d0d;font-weight:700;transform:scaleX(0.944);-webkit-text-stroke:0.25px #0d0d0d;">Janeiro</div>
<div class="t" style="left:192.00px;top:675.69px;font-size:10.43px;color:#262626;transform:scaleX(0.986);">R$ 16.500,00</div>
<div class="t" style="left:192.00px;top:706.69px;font-size:10.43px;color:#262626;transform:scaleX(0.986);">R$ 7.695,00</div>
<div class="t" style="left:192.00px;top:737.89px;font-size:10.72px;color:#e4efda;transform:scaleX(0.962);">R$8.805</div>
<div class="t" style="left:282.20px;top:646.28px;font-size:12.75px;color:#0d0d0d;font-weight:700;transform:scaleX(0.979);-webkit-text-stroke:0.25px #0d0d0d;">Fevereiro</div>
<div class="t" style="left:282.00px;top:675.69px;font-size:10.43px;color:#262626;transform:scaleX(0.986);">R$ 7.700,00</div>
<div class="t" style="left:282.00px;top:706.69px;font-size:10.43px;color:#262626;transform:scaleX(0.986);">R$ 5.985,00</div>
<div class="t" style="left:282.00px;top:737.89px;font-size:10.72px;color:#e4efda;transform:scaleX(0.962);">R$1.715</div>
<div class="t" style="left:372.20px;top:646.28px;font-size:12.75px;color:#0d0d0d;font-weight:700;transform:scaleX(0.985);-webkit-text-stroke:0.25px #0d0d0d;">Março</div>
<div class="t" style="left:372.00px;top:675.69px;font-size:10.43px;color:#262626;transform:scaleX(0.986);">R$ 5.500,00</div>
<div class="t" style="left:372.00px;top:706.69px;font-size:10.43px;color:#262626;transform:scaleX(0.986);">R$ 4.275,00</div>
<div class="t" style="left:372.00px;top:737.89px;font-size:10.72px;color:#e4efda;transform:scaleX(0.962);">R$1.225</div>
<div class="t" style="left:462.20px;top:646.28px;font-size:12.75px;color:#0d0d0d;font-weight:700;transform:scaleX(0.940);-webkit-text-stroke:0.25px #0d0d0d;">Abril</div>
<div class="t" style="left:462.00px;top:675.69px;font-size:10.43px;color:#262626;transform:scaleX(0.986);">R$ 8.800,00</div>
<div class="t" style="left:462.00px;top:706.69px;font-size:10.43px;color:#262626;transform:scaleX(0.986);">R$ 6.300,00</div>
<div class="t" style="left:462.00px;top:737.89px;font-size:10.72px;color:#e4efda;transform:scaleX(0.962);">R$2.500</div>
<div class="t" style="left:552.20px;top:646.28px;font-size:12.75px;color:#0d0d0d;font-weight:700;transform:scaleX(1.022);-webkit-text-stroke:0.25px #0d0d0d;">Maio</div>
<div class="t" style="left:552.00px;top:675.69px;font-size:10.43px;color:#262626;transform:scaleX(0.986);">R$ 13.200,00</div>
<div class="t" style="left:552.00px;top:706.69px;font-size:10.43px;color:#262626;transform:scaleX(0.986);">R$ 7.695,00</div>
<div class="t" style="left:552.00px;top:737.89px;font-size:10.72px;color:#e4efda;transform:scaleX(0.962);">R$5.505</div>
<div class="t" style="left:642.20px;top:646.28px;font-size:12.75px;color:#0d0d0d;font-weight:700;transform:scaleX(0.910);-webkit-text-stroke:0.25px #0d0d0d;">Junho</div>
<div class="t" style="left:642.00px;top:675.69px;font-size:10.43px;color:#262626;transform:scaleX(0.986);">R$ 6.050,00</div>
<div class="t" style="left:642.00px;top:706.69px;font-size:10.43px;color:#262626;transform:scaleX(0.986);">R$ 4.500,00</div>
<div class="t" style="left:642.00px;top:737.89px;font-size:10.72px;color:#e4efda;transform:scaleX(0.962);">R$1.550</div>
<div class="t" style="left:732.20px;top:646.28px;font-size:12.75px;color:#0d0d0d;font-weight:700;transform:scaleX(0.918);-webkit-text-stroke:0.25px #0d0d0d;">Julho</div>
<div class="t" style="left:732.00px;top:675.69px;font-size:10.43px;color:#262626;transform:scaleX(0.986);">R$ 0,00</div>
<div class="t" style="left:732.00px;top:706.69px;font-size:10.43px;color:#262626;transform:scaleX(0.986);">R$ 4.500,00</div>
<div class="t" style="left:731.70px;top:737.89px;font-size:10.72px;color:#f8e0e0;transform:scaleX(0.986);">-R$4.500</div>
<div class="t" style="left:822.20px;top:646.28px;font-size:12.75px;color:#0d0d0d;font-weight:700;transform:scaleX(0.929);-webkit-text-stroke:0.25px #0d0d0d;">Agosto</div>
<div class="t" style="left:822.00px;top:675.69px;font-size:10.43px;color:#262626;transform:scaleX(0.986);">R$ 7.700,00</div>
<div class="t" style="left:822.00px;top:706.69px;font-size:10.43px;color:#262626;transform:scaleX(0.986);">R$ 5.985,00</div>
<div class="t" style="left:822.00px;top:737.89px;font-size:10.72px;color:#e4efda;transform:scaleX(0.962);">R$1.715</div>
<div class="t" style="left:912.20px;top:646.28px;font-size:12.75px;color:#0d0d0d;font-weight:700;transform:scaleX(0.986);-webkit-text-stroke:0.25px #0d0d0d;">Setembro</div>
<div class="t" style="left:912.00px;top:675.69px;font-size:10.43px;color:#262626;transform:scaleX(0.986);">R$ 7.150,00</div>
<div class="t" style="left:912.00px;top:706.69px;font-size:10.43px;color:#262626;transform:scaleX(0.986);">R$ 5.557,50</div>
<div class="t" style="left:912.00px;top:737.89px;font-size:10.72px;color:#e4efda;transform:scaleX(0.962);">R$1.593</div>
<div class="t" style="left:1002.20px;top:646.28px;font-size:12.75px;color:#0d0d0d;font-weight:700;transform:scaleX(0.994);-webkit-text-stroke:0.25px #0d0d0d;">Outubro</div>
<div class="t" style="left:1002.00px;top:675.69px;font-size:10.43px;color:#262626;transform:scaleX(0.986);">R$ 5.500,00</div>
<div class="t" style="left:1002.00px;top:706.69px;font-size:10.43px;color:#262626;transform:scaleX(0.986);">R$ 4.050,00</div>
<div class="t" style="left:1002.00px;top:737.89px;font-size:10.72px;color:#e4efda;transform:scaleX(0.962);">R$1.450</div>
<div class="t" style="left:1092.20px;top:646.28px;font-size:12.75px;color:#0d0d0d;font-weight:700;transform:scaleX(0.986);-webkit-text-stroke:0.25px #0d0d0d;">Novembro</div>
<div class="t" style="left:1092.00px;top:675.69px;font-size:10.43px;color:#262626;transform:scaleX(0.986);">R$ 4.400,00</div>
<div class="t" style="left:1092.00px;top:706.69px;font-size:10.43px;color:#262626;transform:scaleX(0.986);">R$ 3.420,00</div>
<div class="t" style="left:1092.00px;top:737.89px;font-size:10.72px;color:#e4efda;transform:scaleX(0.962);">R$980</div>
<div class="t" style="left:1182.20px;top:646.28px;font-size:12.75px;color:#0d0d0d;font-weight:700;-webkit-text-stroke:0.25px #0d0d0d;">Dezembro</div>
<div class="t" style="left:1182.00px;top:675.69px;font-size:10.43px;color:#262626;transform:scaleX(0.986);">R$ 7.700,00</div>
<div class="t" style="left:1182.00px;top:706.69px;font-size:10.43px;color:#262626;transform:scaleX(0.986);">R$ 5.985,00</div>
<div class="t" style="left:1182.00px;top:737.89px;font-size:10.72px;color:#e4efda;transform:scaleX(0.962);">R$1.715</div>
<div class="t" style="left:1272.00px;top:646.28px;font-size:12.75px;color:#f2f2f2;font-weight:700;transform:scaleX(1.011);-webkit-text-stroke:0.2px #f2f2f2;">Total</div>
<div class="t" style="left:1272.50px;top:675.69px;font-size:10.43px;color:#f0f0f0;transform:scaleX(0.986);">R$ 90.200,00</div>
<div class="t" style="left:1272.50px;top:706.69px;font-size:10.43px;color:#f0f0f0;transform:scaleX(0.986);">R$ 65.947,50</div>
<div class="t" style="left:1272.50px;top:737.89px;font-size:10.72px;color:#e4efda;transform:scaleX(0.962);">R$ 24.252,50</div>
<div class="t" style="left:10.71px;top:839.63px;font-size:12.61px;color:#3a3a3a;transform:scaleX(0.890);">Pronto</div>
<div class="t" style="left:118.00px;top:839.63px;font-size:12.61px;color:#262626;font-weight:700;transform:scaleX(0.838);">Acessibilidade: investigar</div>
<div class="t" style="left:1570.00px;top:839.73px;font-size:12.32px;color:#3a3a3a;transform:scaleX(0.810);">90%</div>
</body></html>
